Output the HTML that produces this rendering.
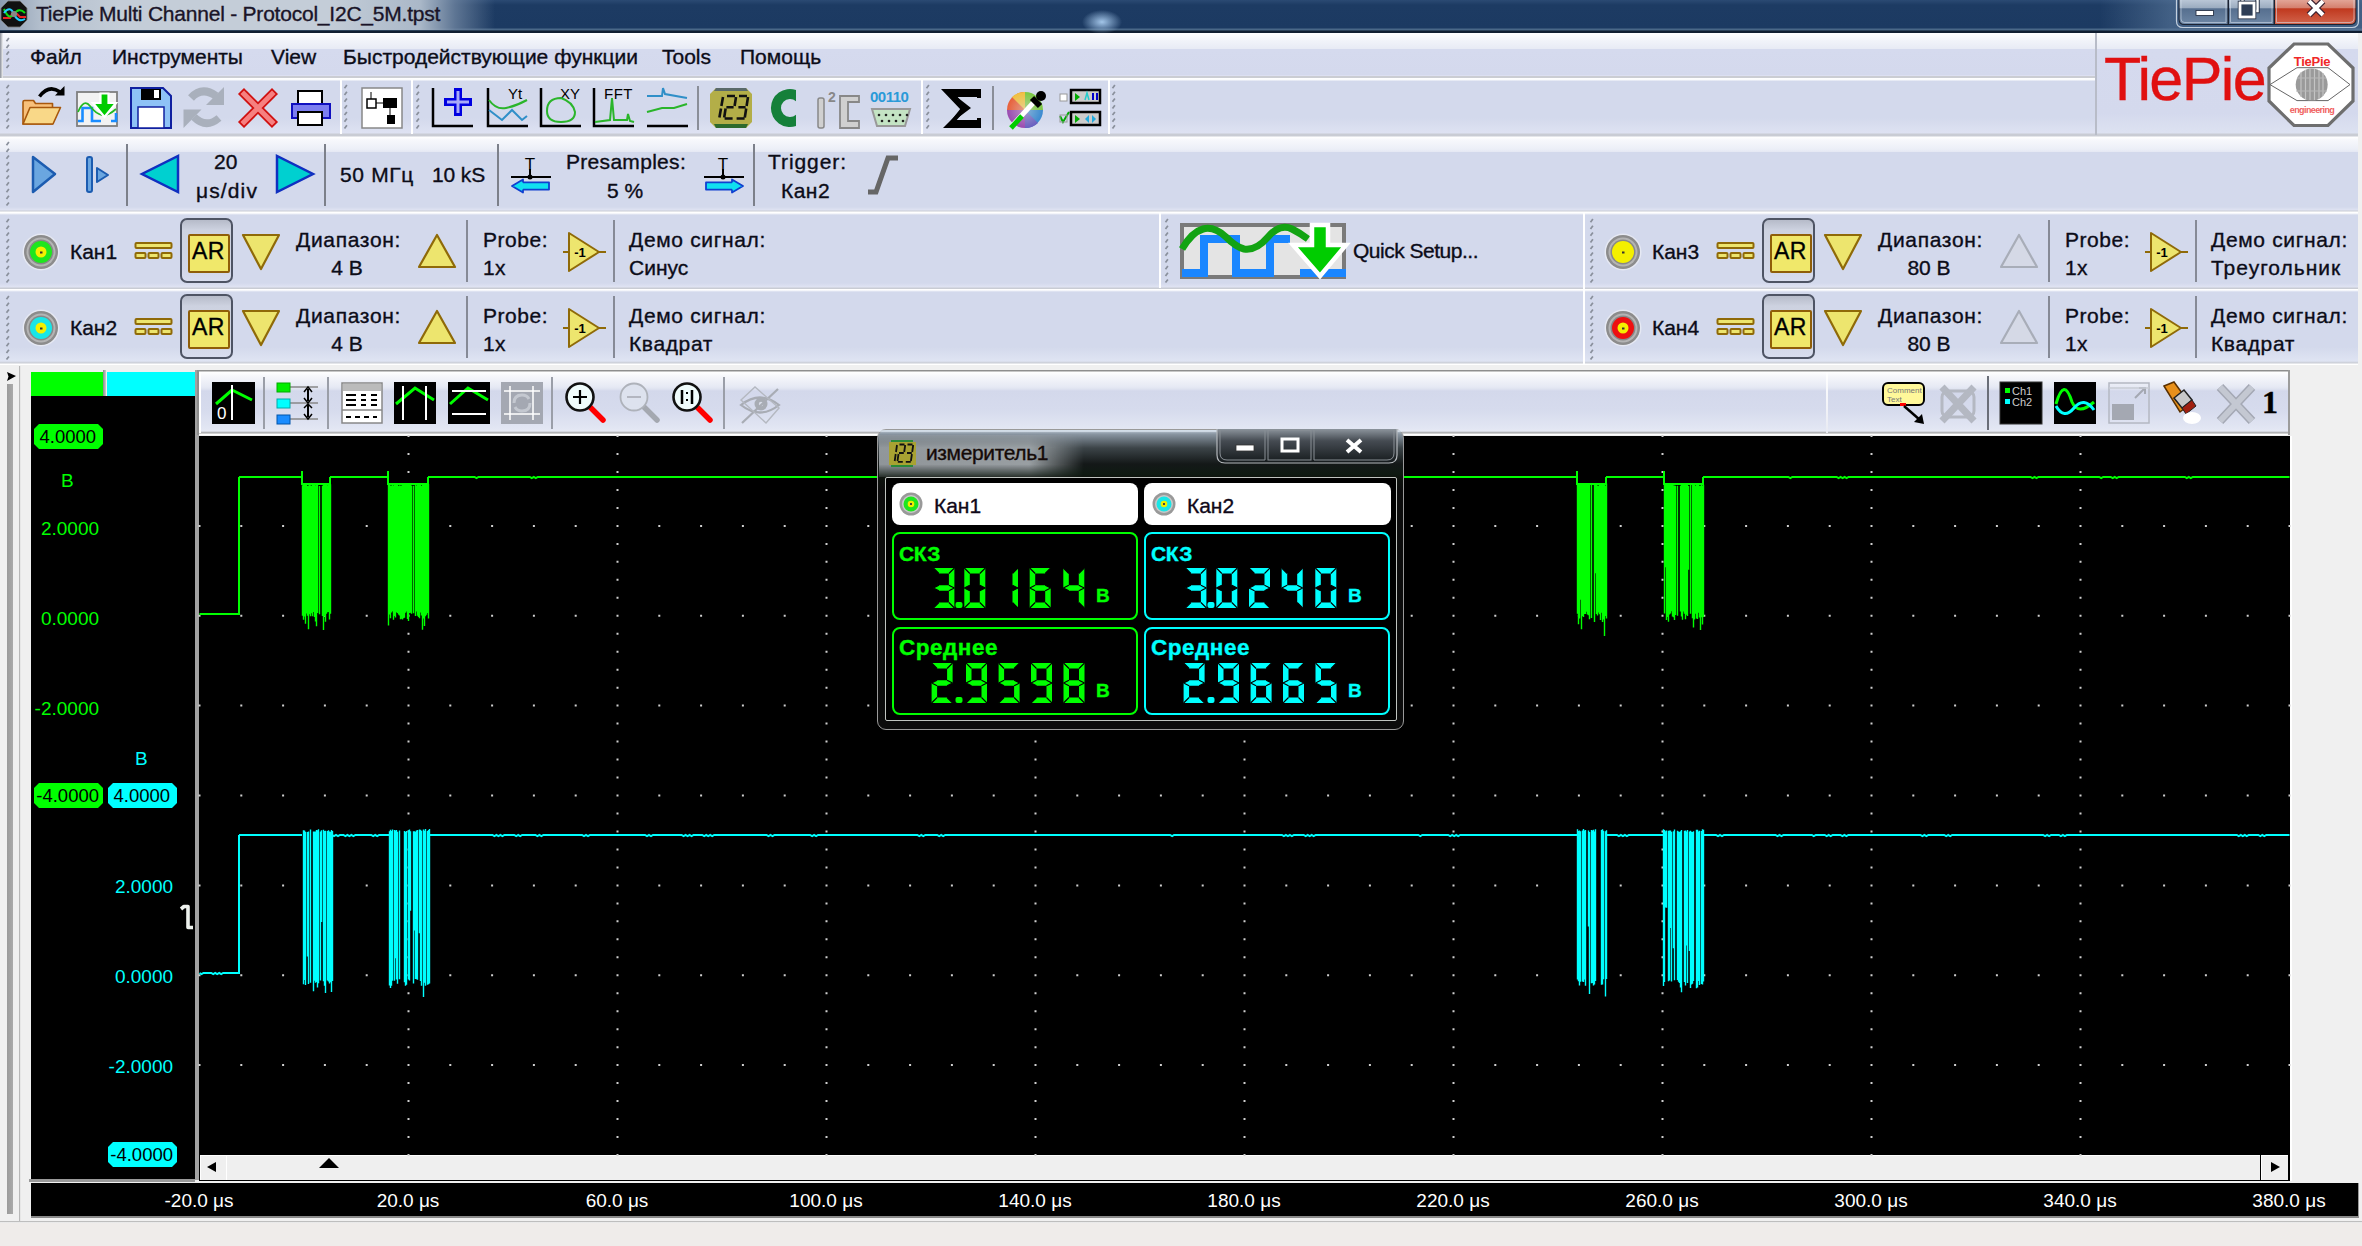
<!DOCTYPE html>
<html><head><meta charset="utf-8"><style>
html,body{margin:0;padding:0;width:2362px;height:1246px;overflow:hidden;background:#f0f0f0;position:relative}
.t{position:absolute;font-family:"Liberation Sans", sans-serif;white-space:nowrap;line-height:1;-webkit-text-stroke:0.35px currentColor}
svg{overflow:visible}
</style></head><body>
<div style="position:absolute;left:0px;top:0px;width:2362px;height:33px;background:linear-gradient(#2b4a73 0px,#1d3b63 5px,#1c3a62 27.5px,#4a6888 29.5px,#2a4058 30.5px,#0f1d30 31px,#0f1d30 33px)"></div>
<div style="position:absolute;left:0px;top:0px;width:500px;height:30px;background:linear-gradient(90deg,rgba(140,156,178,1) 0px,rgba(178,190,204,1) 40px,rgba(196,205,216,1) 120px,rgba(196,205,216,1) 330px,rgba(170,184,200,1) 420px,rgba(110,132,160,0.8) 455px,rgba(28,58,98,0) 495px)"></div>
<div style="position:absolute;left:1080px;top:8px;width:44px;height:26px;background:radial-gradient(ellipse 20px 12px at 22px 14px,rgba(170,205,240,0.95),rgba(170,205,240,0))"></div>
<div style="position:absolute;left:2100px;top:0px;width:262px;height:31px;background:linear-gradient(90deg,rgba(60,90,130,0),rgba(90,120,155,0.6) 70px,rgba(90,120,155,0.6))"></div>
<svg style="position:absolute;left:1px;top:1px;" width="26" height="26" viewBox="0 0 26 26"><polygon points="7,0 19,0 26,7 26,19 19,26 7,26 0,19 0,7" fill="#111" stroke="#777" stroke-width="0.8"/><path d="M2,17 L9,17 L11,13 L16,13 L19,16 L25,16" stroke="#e22" stroke-width="2" fill="none"/><path d="M3,8 Q8,20 13,13 T24,12" stroke="#1d1" stroke-width="2" fill="none"/><path d="M3,12 Q9,4 13,13 T24,18" stroke="#2cf" stroke-width="2" fill="none"/><circle cx="13" cy="13" r="3" fill="#888"/></svg>
<div class="t" style="left:36px;top:3.02px;font-size:21px;color:#1a1428;letter-spacing:-0.22px;">TiePie Multi Channel - Protocol_I2C_5M.tpst</div>
<svg style="position:absolute;left:2174px;top:0px;" width="188" height="30" viewBox="0 0 188 30"><defs><linearGradient id="gb" x1="0" y1="0" x2="0" y2="1"><stop offset="0" stop-color="#b9c6d6"/><stop offset="0.34" stop-color="#9aabbf"/><stop offset="0.36" stop-color="#566f8f"/><stop offset="1" stop-color="#6d86a4"/></linearGradient><linearGradient id="gr" x1="0" y1="0" x2="0" y2="1"><stop offset="0" stop-color="#e2a496"/><stop offset="0.34" stop-color="#d47e6c"/><stop offset="0.36" stop-color="#c0381e"/><stop offset="1" stop-color="#d2644c"/></linearGradient></defs><path d="M2.5,0 L2.5,21 Q2.5,27.5 9,27.5 L178,27.5 Q184.5,27.5 184.5,21 L184.5,0" fill="none" stroke="#c4d0de" stroke-width="1.2"/><path d="M4.5,0 L4.5,19 Q4.5,25 10.5,25 L176,25 Q182.5,25 182.5,19 L182.5,0 Z" fill="#1a2232"/><path d="M5.5,0 L5.5,19 Q5.5,24 10.5,24 L53.5,24 L53.5,0 Z" fill="url(#gb)"/><rect x="55" y="0" width="44.5" height="24" fill="url(#gb)"/><path d="M101,0 L101,24 L176,24 Q181.5,24 181.5,19 L181.5,0 Z" fill="url(#gr)"/><path d="M7,0 L7,19 Q7,22.5 10.5,22.5 L52,22.5 L52,0 M56.5,0 L56.5,22.5 L98,22.5 L98,0 M102.5,0 L102.5,22.5 L176,22.5 Q180,22.5 180,19 L180,0" fill="none" stroke="#d8e2ee" stroke-width="0.8" opacity="0.7"/><rect x="22" y="10.5" width="17.5" height="5" fill="#fff" stroke="#2a3448" stroke-width="0.9"/><rect x="68.5" y="-3" width="15" height="14" fill="none" stroke="#2a3448" stroke-width="4.5"/><rect x="68.5" y="-3" width="15" height="14" fill="none" stroke="#fff" stroke-width="2.5"/><rect x="66" y="3" width="14" height="14" fill="#2e3e56" stroke="#2a3448" stroke-width="4.5"/><rect x="66" y="3" width="14" height="14" fill="#2e3e56" stroke="#fff" stroke-width="2.8"/><path d="M135,1 L149,15 M149,1 L135,15" stroke="#3a2030" stroke-width="6.5"/><path d="M135,1 L149,15 M149,1 L135,15" stroke="#fff" stroke-width="4"/></svg>
<div style="position:absolute;left:0px;top:33px;width:2362px;height:45px;background:linear-gradient(#fdfdfe 0px,#f3f5fa 6px,#e8ebf5 15.5px,#d5daee 16.5px,#d4d9ed 41.5px,#dcdff1 42.5px,#cbcdd3 43.5px,#cbcdd3 45px)"></div>
<div style="position:absolute;left:0px;top:33px;width:3px;height:1213px;background:linear-gradient(90deg,#8a8f98,#f3f4f6)"></div>
<div class="t" style="left:30px;top:46.02px;font-size:21px;color:#0c0c18;">Файл</div>
<div class="t" style="left:112px;top:46.02px;font-size:21px;color:#0c0c18;">Инструменты</div>
<div class="t" style="left:271px;top:46.02px;font-size:21px;color:#0c0c18;">View</div>
<div class="t" style="left:343px;top:46.02px;font-size:21px;color:#0c0c18;">Быстродействующие функции</div>
<div class="t" style="left:662px;top:46.02px;font-size:21px;color:#0c0c18;">Tools</div>
<div class="t" style="left:740px;top:46.02px;font-size:21px;color:#0c0c18;">Помощь</div>
<div style="position:absolute;left:0px;top:78px;width:2095px;height:57px;background:linear-gradient(#ffffff 0px,#fafbfd 2px,#d3d9ec 3px,#d3d9ec 40px,#dee2f2 55px,#c9ccd4 56px,#c9ccd4 57px)"></div>
<div style="position:absolute;left:0px;top:135px;width:2358px;height:77px;background:linear-gradient(#c9ccd4 0px,#c9ccd4 1px,#ffffff 2px,#f7f8fc 5px,#eceff7 14px,#e6e9f4 16.5px,#d3d9ec 17.5px,#d3d9ec 72px,#dfe3f2 75px,#c9ccd4 76px)"></div>
<div style="position:absolute;left:2095px;top:33px;width:263px;height:102px;background:linear-gradient(#fdfdfe 0px,#f3f5fa 6px,#e8ebf5 15.5px,#d5daee 16.5px,#d4d9ed 80px,#dde2f1 100px,#c9ccd4 101px);border-left:2px solid #b8bcc8"></div>
<div style="position:absolute;left:2358px;top:33px;width:4px;height:1213px;background:#f0f0f0"></div>
<svg style="position:absolute;left:5px;top:37px;" width="6" height="32" viewBox="0 0 6 32"><path d="M0.8,3.8 L3.2,0.6 L4.6,1.6 L2.2,4.8 ZM0.8,10.5 L3.2,7.3 L4.6,8.3 L2.2,11.5 ZM0.8,17.2 L3.2,14.0 L4.6,15.0 L2.2,18.2 ZM0.8,23.9 L3.2,20.7 L4.6,21.7 L2.2,24.9 ZM0.8,30.6 L3.2,27.4 L4.6,28.4 L2.2,31.6 Z" fill="#8a909c"/></svg>
<svg style="position:absolute;left:5px;top:84px;" width="6" height="44" viewBox="0 0 6 44"><path d="M0.8,3.8 L3.2,0.6 L4.6,1.6 L2.2,4.8 ZM0.8,10.5 L3.2,7.3 L4.6,8.3 L2.2,11.5 ZM0.8,17.2 L3.2,14.0 L4.6,15.0 L2.2,18.2 ZM0.8,23.9 L3.2,20.7 L4.6,21.7 L2.2,24.9 ZM0.8,30.6 L3.2,27.4 L4.6,28.4 L2.2,31.6 ZM0.8,37.3 L3.2,34.1 L4.6,35.1 L2.2,38.3 ZM0.8,44.0 L3.2,40.8 L4.6,41.8 L2.2,45.0 Z" fill="#8a909c"/></svg>
<svg style="position:absolute;left:343px;top:84px;" width="6" height="44" viewBox="0 0 6 44"><path d="M0.8,3.8 L3.2,0.6 L4.6,1.6 L2.2,4.8 ZM0.8,10.5 L3.2,7.3 L4.6,8.3 L2.2,11.5 ZM0.8,17.2 L3.2,14.0 L4.6,15.0 L2.2,18.2 ZM0.8,23.9 L3.2,20.7 L4.6,21.7 L2.2,24.9 ZM0.8,30.6 L3.2,27.4 L4.6,28.4 L2.2,31.6 ZM0.8,37.3 L3.2,34.1 L4.6,35.1 L2.2,38.3 ZM0.8,44.0 L3.2,40.8 L4.6,41.8 L2.2,45.0 Z" fill="#8a909c"/></svg>
<svg style="position:absolute;left:415px;top:84px;" width="6" height="44" viewBox="0 0 6 44"><path d="M0.8,3.8 L3.2,0.6 L4.6,1.6 L2.2,4.8 ZM0.8,10.5 L3.2,7.3 L4.6,8.3 L2.2,11.5 ZM0.8,17.2 L3.2,14.0 L4.6,15.0 L2.2,18.2 ZM0.8,23.9 L3.2,20.7 L4.6,21.7 L2.2,24.9 ZM0.8,30.6 L3.2,27.4 L4.6,28.4 L2.2,31.6 ZM0.8,37.3 L3.2,34.1 L4.6,35.1 L2.2,38.3 ZM0.8,44.0 L3.2,40.8 L4.6,41.8 L2.2,45.0 Z" fill="#8a909c"/></svg>
<svg style="position:absolute;left:925px;top:84px;" width="6" height="44" viewBox="0 0 6 44"><path d="M0.8,3.8 L3.2,0.6 L4.6,1.6 L2.2,4.8 ZM0.8,10.5 L3.2,7.3 L4.6,8.3 L2.2,11.5 ZM0.8,17.2 L3.2,14.0 L4.6,15.0 L2.2,18.2 ZM0.8,23.9 L3.2,20.7 L4.6,21.7 L2.2,24.9 ZM0.8,30.6 L3.2,27.4 L4.6,28.4 L2.2,31.6 ZM0.8,37.3 L3.2,34.1 L4.6,35.1 L2.2,38.3 ZM0.8,44.0 L3.2,40.8 L4.6,41.8 L2.2,45.0 Z" fill="#8a909c"/></svg>
<svg style="position:absolute;left:1111px;top:84px;" width="6" height="44" viewBox="0 0 6 44"><path d="M0.8,3.8 L3.2,0.6 L4.6,1.6 L2.2,4.8 ZM0.8,10.5 L3.2,7.3 L4.6,8.3 L2.2,11.5 ZM0.8,17.2 L3.2,14.0 L4.6,15.0 L2.2,18.2 ZM0.8,23.9 L3.2,20.7 L4.6,21.7 L2.2,24.9 ZM0.8,30.6 L3.2,27.4 L4.6,28.4 L2.2,31.6 ZM0.8,37.3 L3.2,34.1 L4.6,35.1 L2.2,38.3 ZM0.8,44.0 L3.2,40.8 L4.6,41.8 L2.2,45.0 Z" fill="#8a909c"/></svg>
<svg style="position:absolute;left:5px;top:141px;" width="6" height="66" viewBox="0 0 6 66"><path d="M0.8,3.8 L3.2,0.6 L4.6,1.6 L2.2,4.8 ZM0.8,10.5 L3.2,7.3 L4.6,8.3 L2.2,11.5 ZM0.8,17.2 L3.2,14.0 L4.6,15.0 L2.2,18.2 ZM0.8,23.9 L3.2,20.7 L4.6,21.7 L2.2,24.9 ZM0.8,30.6 L3.2,27.4 L4.6,28.4 L2.2,31.6 ZM0.8,37.3 L3.2,34.1 L4.6,35.1 L2.2,38.3 ZM0.8,44.0 L3.2,40.8 L4.6,41.8 L2.2,45.0 ZM0.8,50.7 L3.2,47.5 L4.6,48.5 L2.2,51.7 ZM0.8,57.4 L3.2,54.2 L4.6,55.2 L2.2,58.4 ZM0.8,64.1 L3.2,60.9 L4.6,61.9 L2.2,65.1 Z" fill="#8a909c"/></svg>
<div style="position:absolute;left:340px;top:80px;width:2px;height:54px;background:#fff"></div>
<div style="position:absolute;left:411px;top:80px;width:2px;height:54px;background:#fff"></div>
<div style="position:absolute;left:921px;top:80px;width:2px;height:54px;background:#fff"></div>
<div style="position:absolute;left:1108px;top:80px;width:2px;height:54px;background:#fff"></div>
<div style="position:absolute;left:697px;top:86px;width:2px;height:44px;background:#8a8e98"></div>
<div style="position:absolute;left:992px;top:86px;width:2px;height:44px;background:#8a8e98"></div>
<div style="position:absolute;left:126px;top:144px;width:2px;height:62px;background:#7c808a"></div>
<div style="position:absolute;left:324px;top:144px;width:2px;height:62px;background:#7c808a"></div>
<div style="position:absolute;left:497px;top:144px;width:2px;height:62px;background:#7c808a"></div>
<div style="position:absolute;left:753px;top:144px;width:2px;height:62px;background:#7c808a"></div>
<svg style="position:absolute;left:20px;top:85px;" width="46" height="44" viewBox="0 0 46 44"><path d="M19.5,11.5 Q29,-1 40,7" stroke="#000" stroke-width="3.6" fill="none"/><polygon points="44.5,1 44.5,10.5 35,10.5" fill="#000"/><path d="M3,39 L3,17 Q3,15.5 4.5,15.5 L13.5,15.5 L15.5,18.5 L32.5,18.5 L32.5,39 Z" fill="#f8c07a" stroke="#a8580c" stroke-width="1.6" stroke-linejoin="round"/><path d="M3,39 L33,39 L40.5,22.5 L10,22.5 Z" fill="#f9d888" stroke="#a8580c" stroke-width="1.6" stroke-linejoin="round"/></svg>
<svg style="position:absolute;left:76px;top:91px;" width="42" height="36" viewBox="0 0 42 36"><rect x="1" y="1" width="40" height="34" fill="#f2f2f2" stroke="#7e7e7e" stroke-width="1.8"/><path d="M2,30 L6.5,30 L6.5,17 L16,17 L16,30 L25,30" stroke="#1a8cff" stroke-width="2.6" fill="none"/><path d="M35,30 L40,30 L40,22" stroke="#1a8cff" stroke-width="2.6" fill="none"/><path d="M2,21 Q8,7 14,15 T26,24 T40,18" stroke="#22bb22" stroke-width="1.8" fill="none"/><polygon points="24.5,2.5 32.5,2.5 32.5,12 40,12 28.5,26 17,12 24.5,12" fill="#00cc00" stroke="#fff" stroke-width="2.2"/></svg>
<svg style="position:absolute;left:130px;top:87px;" width="42" height="42" viewBox="0 0 42 42"><path d="M1,1 L33,1 L41,9 L41,41 L1,41 Z" fill="#8ec2f6" stroke="#1020a0" stroke-width="2"/><rect x="11" y="2" width="20" height="11" fill="#000"/><rect x="24" y="3" width="5" height="8" fill="#fff"/><rect x="8" y="20" width="26" height="21" fill="#fff" stroke="#1020a0" stroke-width="1.5"/></svg>
<svg style="position:absolute;left:183px;top:87px;" width="44" height="42" viewBox="0 0 44 42"><path d="M8,11 Q19,-1 33,9" stroke="#a9b0bc" stroke-width="8" fill="none"/><polygon points="41,0 41,18 23,18" fill="#a9b0bc"/><path d="M11,30 Q23,42 36,31" stroke="#a9b0bc" stroke-width="7.5" fill="none"/><polygon points="0.5,22.5 0.5,41 18.5,22.5" fill="#a9b0bc"/></svg>
<svg style="position:absolute;left:238px;top:88px;" width="40" height="40" viewBox="0 0 40 40"><path d="M6,6 L34,34 M34,6 L6,34" stroke="#d01010" stroke-width="8.5" stroke-linecap="square"/><path d="M6,6 L34,34 M34,6 L6,34" stroke="#f68080" stroke-width="5" stroke-linecap="square"/></svg>
<svg style="position:absolute;left:291px;top:90px;" width="40" height="36" viewBox="0 0 40 36"><rect x="7" y="1" width="24" height="16" fill="#fff" stroke="#000" stroke-width="2"/><rect x="1" y="14" width="38" height="14" fill="#7c7ef0" stroke="#1010c0" stroke-width="2"/><rect x="7" y="22" width="24" height="13" fill="#fff" stroke="#000" stroke-width="2"/></svg>
<svg style="position:absolute;left:361px;top:87px;" width="42" height="42" viewBox="0 0 42 42"><rect x="1" y="1" width="40" height="40" fill="#fff" stroke="#888" stroke-width="1.5"/><rect x="6" y="12" width="9" height="9" fill="#fff" stroke="#000" stroke-width="1.5"/><line x1="10" y1="5" x2="10" y2="12" stroke="#000"/><line x1="15" y1="16" x2="22" y2="16" stroke="#000"/><rect x="22" y="11" width="14" height="10" fill="#000"/><line x1="29" y1="21" x2="29" y2="30" stroke="#000"/><rect x="26" y="28" width="8" height="9" fill="#000"/></svg>
<svg style="position:absolute;left:431px;top:86px;" width="44" height="44" viewBox="0 0 44 44"><path d="M2,2 L2,40 L42,40" stroke="#000" stroke-width="2.5" fill="none"/><path d="M27,2 L27,30 M13,16 L41,16" stroke="#0000e0" stroke-width="8"/><path d="M27,5 L27,27 M16,16 L38,16" stroke="#a8aaf8" stroke-width="3"/></svg>
<svg style="position:absolute;left:486px;top:86px;" width="44" height="44" viewBox="0 0 44 44"><path d="M2,2 L2,40 L42,40" stroke="#000" stroke-width="2.5" fill="none"/><text x="22" y="13" font-family="Liberation Sans" font-size="15">Yt</text><path d="M3,14 Q10,24 20,22 T41,14" stroke="#2ab52a" stroke-width="2" fill="none"/><path d="M3,24 L16,34 L26,24 L36,34 L41,30" stroke="#2f8fc8" stroke-width="2" fill="none"/></svg>
<svg style="position:absolute;left:539px;top:86px;" width="44" height="44" viewBox="0 0 44 44"><path d="M2,2 L2,40 L42,40" stroke="#000" stroke-width="2.5" fill="none"/><text x="21" y="13" font-family="Liberation Sans" font-size="15">XY</text><path d="M22,12 Q8,12 8,25 Q8,36 22,36 Q36,36 36,26 Q34,16 22,12 Z" stroke="#2ab52a" stroke-width="2" fill="none"/></svg>
<svg style="position:absolute;left:592px;top:86px;" width="44" height="44" viewBox="0 0 44 44"><path d="M2,2 L2,40 L42,40" stroke="#000" stroke-width="2.5" fill="none"/><text x="12" y="13" font-family="Liberation Sans" font-size="15" letter-spacing="0.5">FFT</text><path d="M3,36 L18,34 L20,12 L22,34 L35,34 L36,28 L38,35 L42,36" stroke="#2ab52a" stroke-width="2" fill="none"/></svg>
<svg style="position:absolute;left:646px;top:86px;" width="44" height="44" viewBox="0 0 44 44"><path d="M1,40 L42,40" stroke="#000" stroke-width="2.5"/><path d="M1,10 L16,10 L17,2 L19,8 L41,12" stroke="#2f8fc8" stroke-width="2" fill="none"/><path d="M1,26 L16,22 L28,22 L41,18" stroke="#2ab52a" stroke-width="2" fill="none"/></svg>
<svg style="position:absolute;left:709px;top:87px;" width="44" height="42" viewBox="0 0 44 42"><path d="M7,1 L37,1 L43,7 L43,35 L37,41 L7,41 L1,35 L1,7 Z" fill="#b3ae48"/><path d="M7,1 L37,1 L39,4 L5,4 Z" fill="#5a6a6a"/><path d="M5,37 L39,37 L37,41 L7,41 Z" fill="#2d6a2d"/><path d="M14,10 L12.4,19 M12,21.5 L10.4,30.5 M18,9 L26,9 M27,10 L25.6,19 M17.4,20.3 L24.6,20.3 M16.6,21.5 L15.2,30.5 M15.6,31.5 L23.6,31.5 M30,9 L38,9 M39,10 L37.6,19 M29.4,20.3 L36.6,20.3 M37.2,21.5 L35.8,30.5 M27.6,31.5 L35.6,31.5" stroke="#111" stroke-width="2.6"/></svg>
<svg style="position:absolute;left:770px;top:88px;" width="28" height="40" viewBox="0 0 28 40"><path d="M26,2 A19,19 0 1 0 26,38 L26,26.7 A9,9 0 1 1 26,13.3 Z" fill="#15803a"/></svg>
<svg style="position:absolute;left:816px;top:88px;" width="46" height="40" viewBox="0 0 46 40"><rect x="2" y="10" width="6" height="30" rx="2" fill="#d0d0d0" stroke="#888" stroke-width="1.5"/><text x="12" y="14" font-family="Liberation Sans" font-size="14" font-weight="bold" fill="#888">2</text><path d="M43,14 L43,8 L24,8 L24,40 L43,40 L43,33 L32,33 L32,14 Z" fill="#d0d0d0" stroke="#888" stroke-width="1.8"/></svg>
<svg style="position:absolute;left:870px;top:88px;" width="42" height="40" viewBox="0 0 42 40"><text x="0" y="14" font-family="Liberation Sans" font-size="15" font-weight="bold" fill="#2a9ad8" letter-spacing="-0.5">00110</text><path d="M2,21 L40,21 L35,38 L7,38 Z" fill="#c4e4c4" stroke="#999" stroke-width="2"/><g fill="#222"><circle cx="9" cy="27" r="1.3"/><circle cx="16" cy="27" r="1.3"/><circle cx="23" cy="27" r="1.3"/><circle cx="30" cy="27" r="1.3"/><circle cx="37" cy="27" r="1.3"/><circle cx="12" cy="33" r="1.3"/><circle cx="19" cy="33" r="1.3"/><circle cx="26" cy="33" r="1.3"/><circle cx="33" cy="33" r="1.3"/></g></svg>
<svg style="position:absolute;left:941px;top:88px;" width="42" height="40" viewBox="0 0 42 40"><path d="M2,1 L40,1 L40,10 L36,10 L36,6 L14,6 L26,20 L14,34 L36,34 L36,30 L40,30 L40,40 L4,40 L20,20 Z" fill="#000"/><path d="M0,1 L40,1 L40,9 L16,9 L30,20 L14,32 L40,32 L40,40 L2,40 L20,22 Z" fill="#000"/></svg>
<svg style="position:absolute;left:1006px;top:88px;" width="42" height="42" viewBox="0 0 42 42"><defs><radialGradient id="cw" cx="0.5" cy="0.5" r="0.5"><stop offset="0" stop-color="#ddd"/><stop offset="1" stop-color="#ddd" stop-opacity="0"/></radialGradient></defs><circle cx="19" cy="22" r="18" fill="url(#cwc)"/><path d="M19,22 L19,4 A18,18 0 0 1 37,22 Z" fill="#7bc843"/><path d="M19,22 L37,22 A18,18 0 0 1 19,40 Z" fill="#3a8ad0"/><path d="M19,22 L19,40 A18,18 0 0 1 1,22 Z" fill="#9a4ab0"/><path d="M19,22 L1,22 A18,18 0 0 1 19,4 Z" fill="#e8603a"/><path d="M19,22 L6,9 A18,18 0 0 1 19,4 Z" fill="#f0c040"/><path d="M19,22 L32,35 A18,18 0 0 1 19,40 Z" fill="#6a60c0"/><circle cx="19" cy="22" r="18" fill="url(#cw)" opacity="0.5"/><path d="M6,38 L28,14" stroke="#fff" stroke-width="5"/><path d="M5,40 L16,28" stroke="#0c0" stroke-width="5"/><path d="M26,10 L34,18" stroke="#000" stroke-width="6"/><circle cx="35" cy="8" r="5" fill="#000"/></svg>
<svg style="position:absolute;left:1059px;top:88px;" width="44" height="40" viewBox="0 0 44 40"><rect x="1" y="6" width="7" height="7" fill="#fff" stroke="#999"/><rect x="12" y="2" width="29" height="13" fill="#ccc" stroke="#000" stroke-width="2.5"/><polygon points="16,5 21,9 16,13" fill="#0a0"/><path d="M26,12 L28,5 L30,12" stroke="#2cc" stroke-width="1.5" fill="none"/><rect x="33" y="5" width="2" height="7" fill="#00c"/><rect x="37" y="5" width="2" height="7" fill="#00c"/><path d="M1,28 L4,34 L10,24" stroke="#0a0" stroke-width="2" fill="none"/><rect x="1" y="27" width="7" height="7" fill="none" stroke="#999"/><rect x="12" y="24" width="29" height="13" fill="#ccc" stroke="#000" stroke-width="2.5"/><polygon points="16,27 21,31 16,35" fill="#0a0"/><polygon points="30,27 26,31 30,35" fill="#2ad"/><polygon points="33,27 37,31 33,35" fill="#2ad"/></svg>
<div class="t" style="left:2104px;top:49.36px;font-size:61px;color:#e01010;letter-spacing:-1.60px;">TiePie</div>
<svg style="position:absolute;left:2266px;top:42px;" width="90" height="86" viewBox="0 0 90 86"><polygon points="28,2 62,2 87,26 87,59 62,83.5 28,83.5 3,59 3,26" fill="#fff" stroke="#6e6e6e" stroke-width="3.2"/><text x="46" y="23.5" text-anchor="middle" font-family="Liberation Sans" font-size="13" font-weight="bold" fill="#f02828" letter-spacing="-0.3">TiePie</text><path d="M4,42.6 L31,25.7 L62,25.7 L84,42.6 L62,58.6 L31,58.6 Z" fill="none" stroke="#666" stroke-width="1"/><circle cx="45.7" cy="42.6" r="16" fill="#9a9a9a"/><path d="M35,30 L35,55 M39.5,28 L39.5,57 M44,27 L44,58 M48.5,27 L48.5,58 M53,28 L53,57 M57,31 L57,54" stroke="#c4c4c4" stroke-width="1.2"/><path d="M31,36 L60,36 M30,49 L61,49" stroke="#b8b8b8" stroke-width="1"/><text x="46" y="71" text-anchor="middle" font-family="Liberation Sans" font-size="9" font-weight="bold" fill="#f06060" letter-spacing="-0.6">engineering</text></svg>
<svg style="position:absolute;left:31px;top:155px;" width="26" height="40" viewBox="0 0 26 40"><polygon points="2,2 24,19 2,37" fill="#6aa6e0" stroke="#1c5cb0" stroke-width="2.5" stroke-linejoin="round"/></svg>
<svg style="position:absolute;left:85px;top:155px;" width="26" height="40" viewBox="0 0 26 40"><rect x="2" y="2" width="5" height="35" rx="2" fill="#6aa6e0" stroke="#1c5cb0" stroke-width="2"/><polygon points="12,13 23,20 12,27" fill="#6aa6e0" stroke="#1c5cb0" stroke-width="2" stroke-linejoin="round"/></svg>
<svg style="position:absolute;left:140px;top:154px;" width="40" height="41" viewBox="0 0 40 41"><polygon points="38,2 38,38 2,20" fill="#00d0d0" stroke="#1030c0" stroke-width="2.5"/></svg>
<div class="t" style="left:214px;top:151.22px;font-size:21px;color:#0c0c18;">20</div>
<div class="t" style="left:196px;top:179.52px;font-size:21px;color:#0c0c18;letter-spacing:1.12px;">μs/div</div>
<svg style="position:absolute;left:275px;top:154px;" width="40" height="41" viewBox="0 0 40 41"><polygon points="2,2 2,38 38,20" fill="#00d0d0" stroke="#1030c0" stroke-width="2.5"/></svg>
<div class="t" style="left:340px;top:163.92px;font-size:21px;color:#0c0c18;letter-spacing:0.65px;">50 МГц</div>
<div class="t" style="left:432px;top:163.92px;font-size:21px;color:#0c0c18;letter-spacing:-0.13px;">10 kS</div>
<svg style="position:absolute;left:509px;top:154px;" width="44" height="42" viewBox="0 0 44 42"><text x="21" y="16" text-anchor="middle" font-family="Liberation Sans" font-size="17">T</text><path d="M21,15 L21,23 M2,23 L42,23" stroke="#000" stroke-width="2"/><circle cx="21" cy="23" r="2.5" fill="#000"/><path d="M14,28.5 L40,28.5 L40,35.5 L14,35.5 M14,28.5 L14,25.5 L3,32 L14,38.5 L14,35.5" fill="#10e0f0" stroke="#1040d0" stroke-width="1.8" stroke-linejoin="round"/><rect x="14" y="29.5" width="25" height="5" fill="#10e0f0"/></svg>
<div class="t" style="left:566px;top:151.22px;font-size:21px;color:#0c0c18;letter-spacing:0.30px;">Presamples:</div>
<div class="t" style="left:607px;top:180.22px;font-size:21px;color:#0c0c18;letter-spacing:-0.06px;">5 %</div>
<svg style="position:absolute;left:702px;top:154px;" width="44" height="42" viewBox="0 0 44 42"><text x="21" y="16" text-anchor="middle" font-family="Liberation Sans" font-size="17">T</text><path d="M21,15 L21,23 M2,23 L42,23" stroke="#000" stroke-width="2"/><circle cx="21" cy="23" r="2.5" fill="#000"/><path d="M30,28.5 L4,28.5 L4,35.5 L30,35.5 M30,28.5 L30,25.5 L41,32 L30,38.5 L30,35.5" fill="#10e0f0" stroke="#1040d0" stroke-width="1.8" stroke-linejoin="round"/><rect x="5" y="29.5" width="25" height="5" fill="#10e0f0"/></svg>
<div class="t" style="left:768px;top:151.22px;font-size:21px;color:#0c0c18;letter-spacing:0.93px;">Trigger:</div>
<div class="t" style="left:781px;top:179.52px;font-size:21px;color:#0c0c18;letter-spacing:0.46px;">Кан2</div>
<svg style="position:absolute;left:864px;top:154px;" width="40" height="42" viewBox="0 0 40 42"><path d="M4,38 L12,38 L24,4 L34,4" stroke="#666" stroke-width="5" fill="none"/></svg>
<div style="position:absolute;left:0px;top:211px;width:2358px;height:78px;background:linear-gradient(#c9ccd4 0px,#ffffff 1px,#ffffff 2px,#d3d9ec 4px,#d3d9ec 72px,#dfe3f2 76px,#c9ccd4 77px)"></div>
<div style="position:absolute;left:0px;top:289px;width:2358px;height:76px;background:linear-gradient(#ffffff 0px,#ffffff 1px,#d3d9ec 3px,#d3d9ec 58px,#dfe4f3 72px,#c9ccd4 74px,#ffffff 75px)"></div>
<svg style="position:absolute;left:5px;top:218px;" width="6" height="64" viewBox="0 0 6 64"><path d="M0.8,3.8 L3.2,0.6 L4.6,1.6 L2.2,4.8 ZM0.8,10.5 L3.2,7.3 L4.6,8.3 L2.2,11.5 ZM0.8,17.2 L3.2,14.0 L4.6,15.0 L2.2,18.2 ZM0.8,23.9 L3.2,20.7 L4.6,21.7 L2.2,24.9 ZM0.8,30.6 L3.2,27.4 L4.6,28.4 L2.2,31.6 ZM0.8,37.3 L3.2,34.1 L4.6,35.1 L2.2,38.3 ZM0.8,44.0 L3.2,40.8 L4.6,41.8 L2.2,45.0 ZM0.8,50.7 L3.2,47.5 L4.6,48.5 L2.2,51.7 ZM0.8,57.4 L3.2,54.2 L4.6,55.2 L2.2,58.4 ZM0.8,64.1 L3.2,60.9 L4.6,61.9 L2.2,65.1 Z" fill="#8a909c"/></svg>
<svg style="position:absolute;left:5px;top:295px;" width="6" height="64" viewBox="0 0 6 64"><path d="M0.8,3.8 L3.2,0.6 L4.6,1.6 L2.2,4.8 ZM0.8,10.5 L3.2,7.3 L4.6,8.3 L2.2,11.5 ZM0.8,17.2 L3.2,14.0 L4.6,15.0 L2.2,18.2 ZM0.8,23.9 L3.2,20.7 L4.6,21.7 L2.2,24.9 ZM0.8,30.6 L3.2,27.4 L4.6,28.4 L2.2,31.6 ZM0.8,37.3 L3.2,34.1 L4.6,35.1 L2.2,38.3 ZM0.8,44.0 L3.2,40.8 L4.6,41.8 L2.2,45.0 ZM0.8,50.7 L3.2,47.5 L4.6,48.5 L2.2,51.7 ZM0.8,57.4 L3.2,54.2 L4.6,55.2 L2.2,58.4 ZM0.8,64.1 L3.2,60.9 L4.6,61.9 L2.2,65.1 Z" fill="#8a909c"/></svg>
<svg style="position:absolute;left:1164px;top:218px;" width="6" height="64" viewBox="0 0 6 64"><path d="M0.8,3.8 L3.2,0.6 L4.6,1.6 L2.2,4.8 ZM0.8,10.5 L3.2,7.3 L4.6,8.3 L2.2,11.5 ZM0.8,17.2 L3.2,14.0 L4.6,15.0 L2.2,18.2 ZM0.8,23.9 L3.2,20.7 L4.6,21.7 L2.2,24.9 ZM0.8,30.6 L3.2,27.4 L4.6,28.4 L2.2,31.6 ZM0.8,37.3 L3.2,34.1 L4.6,35.1 L2.2,38.3 ZM0.8,44.0 L3.2,40.8 L4.6,41.8 L2.2,45.0 ZM0.8,50.7 L3.2,47.5 L4.6,48.5 L2.2,51.7 ZM0.8,57.4 L3.2,54.2 L4.6,55.2 L2.2,58.4 ZM0.8,64.1 L3.2,60.9 L4.6,61.9 L2.2,65.1 Z" fill="#8a909c"/></svg>
<svg style="position:absolute;left:1589px;top:218px;" width="6" height="64" viewBox="0 0 6 64"><path d="M0.8,3.8 L3.2,0.6 L4.6,1.6 L2.2,4.8 ZM0.8,10.5 L3.2,7.3 L4.6,8.3 L2.2,11.5 ZM0.8,17.2 L3.2,14.0 L4.6,15.0 L2.2,18.2 ZM0.8,23.9 L3.2,20.7 L4.6,21.7 L2.2,24.9 ZM0.8,30.6 L3.2,27.4 L4.6,28.4 L2.2,31.6 ZM0.8,37.3 L3.2,34.1 L4.6,35.1 L2.2,38.3 ZM0.8,44.0 L3.2,40.8 L4.6,41.8 L2.2,45.0 ZM0.8,50.7 L3.2,47.5 L4.6,48.5 L2.2,51.7 ZM0.8,57.4 L3.2,54.2 L4.6,55.2 L2.2,58.4 ZM0.8,64.1 L3.2,60.9 L4.6,61.9 L2.2,65.1 Z" fill="#8a909c"/></svg>
<svg style="position:absolute;left:1589px;top:295px;" width="6" height="64" viewBox="0 0 6 64"><path d="M0.8,3.8 L3.2,0.6 L4.6,1.6 L2.2,4.8 ZM0.8,10.5 L3.2,7.3 L4.6,8.3 L2.2,11.5 ZM0.8,17.2 L3.2,14.0 L4.6,15.0 L2.2,18.2 ZM0.8,23.9 L3.2,20.7 L4.6,21.7 L2.2,24.9 ZM0.8,30.6 L3.2,27.4 L4.6,28.4 L2.2,31.6 ZM0.8,37.3 L3.2,34.1 L4.6,35.1 L2.2,38.3 ZM0.8,44.0 L3.2,40.8 L4.6,41.8 L2.2,45.0 ZM0.8,50.7 L3.2,47.5 L4.6,48.5 L2.2,51.7 ZM0.8,57.4 L3.2,54.2 L4.6,55.2 L2.2,58.4 ZM0.8,64.1 L3.2,60.9 L4.6,61.9 L2.2,65.1 Z" fill="#8a909c"/></svg>
<div style="position:absolute;left:1159px;top:212px;width:2px;height:76px;background:#fff"></div>
<div style="position:absolute;left:1583px;top:212px;width:2px;height:152px;background:#fff"></div>
<svg style="position:absolute;left:21px;top:232px;" width="40" height="40" viewBox="0 0 40 40"><circle cx="20" cy="20" r="18.5" fill="#eef0f6" opacity="0.7"/><circle cx="20" cy="20" r="17" fill="#8c8c8c"/><circle cx="20" cy="20" r="14.5" fill="#b4b4b4"/><circle cx="20" cy="20" r="12.5" fill="#888"/><circle cx="20" cy="20" r="11" fill="#1ee61e"/><circle cx="20" cy="20" r="5.5" fill="#f4f000"/><rect x="19" y="19.5" width="2.5" height="2" fill="#333"/></svg>
<div class="t" style="left:70px;top:241.22px;font-size:21px;color:#0c0c18;letter-spacing:-0.04px;">Кан1</div>
<svg style="position:absolute;left:134px;top:242px;" width="40" height="18" viewBox="0 0 40 18"><rect x="1.5" y="1" width="36" height="5" rx="1" fill="#ede56e" stroke="#8f6a08" stroke-width="2"/><rect x="1.5" y="11" width="10" height="5" rx="1" fill="#ede56e" stroke="#8f6a08" stroke-width="2"/><rect x="14.5" y="11" width="10" height="5" rx="1" fill="#ede56e" stroke="#8f6a08" stroke-width="2"/><rect x="27.5" y="11" width="10" height="5" rx="1" fill="#ede56e" stroke="#8f6a08" stroke-width="2"/></svg>
<div style="position:absolute;left:180px;top:218px;width:49px;height:61px;border:2px solid #4e5464;border-radius:7px;background:linear-gradient(#b6bbc9 0px,#cdd2e0 10px,#d2d7e8 50px,#d8ddee 61px)"></div>
<div style="position:absolute;left:188px;top:234px;width:38px;height:35px;background:#f0e86a;border:2px solid #8f5e08;border-radius:2px"></div>
<div class="t" style="left:192px;top:239.53px;font-size:23px;color:#000;letter-spacing:0.52px;">AR</div>
<svg style="position:absolute;left:242px;top:233px;" width="38" height="38" viewBox="0 0 38 38"><polygon points="1,2 37,2 19,36" fill="#ede56e" stroke="#8f6a08" stroke-width="2.2" stroke-linejoin="round"/></svg>
<div class="t" style="left:296px;top:229.02px;font-size:21px;color:#0c0c18;letter-spacing:0.68px;">Диапазон:</div>
<div class="t" style="left:331.25px;top:257.22px;font-size:21px;color:#0c0c18;">4 В</div>
<svg style="position:absolute;left:418px;top:233px;" width="38" height="38" viewBox="0 0 38 38"><polygon points="19,2 37,34 1,34" fill="#ede56e" stroke="#8f6a08" stroke-width="2.2" stroke-linejoin="round"/></svg>
<div style="position:absolute;left:466px;top:220px;width:2px;height:62px;background:#868a96"></div>
<div class="t" style="left:483px;top:229.02px;font-size:21px;color:#0c0c18;letter-spacing:0.53px;">Probe:</div>
<div class="t" style="left:483px;top:257.22px;font-size:21px;color:#0c0c18;letter-spacing:0.41px;">1x</div>
<svg style="position:absolute;left:563px;top:232px;" width="44" height="40" viewBox="0 0 44 40"><path d="M0,20 L6,20 M36,20 L43,20" stroke="#8f6a08" stroke-width="2"/><polygon points="6,1 36,20 6,39" fill="#ede56e" stroke="#8f6a08" stroke-width="2" stroke-linejoin="round"/><text x="17" y="25" text-anchor="middle" font-family="Liberation Sans" font-size="13" font-weight="bold" fill="#000">-1</text></svg>
<div style="position:absolute;left:613px;top:220px;width:2px;height:62px;background:#868a96"></div>
<div class="t" style="left:629px;top:229.02px;font-size:21px;color:#0c0c18;letter-spacing:0.66px;">Демо сигнал:</div>
<div class="t" style="left:629px;top:257.22px;font-size:21px;color:#0c0c18;">Синус</div>
<svg style="position:absolute;left:21px;top:308px;" width="40" height="40" viewBox="0 0 40 40"><circle cx="20" cy="20" r="18.5" fill="#eef0f6" opacity="0.7"/><circle cx="20" cy="20" r="17" fill="#8c8c8c"/><circle cx="20" cy="20" r="14.5" fill="#b4b4b4"/><circle cx="20" cy="20" r="12.5" fill="#888"/><circle cx="20" cy="20" r="11" fill="#19e6e6"/><circle cx="20" cy="20" r="5.5" fill="#f4f000"/><rect x="19" y="19.5" width="2.5" height="2" fill="#333"/></svg>
<div class="t" style="left:70px;top:317.22px;font-size:21px;color:#0c0c18;letter-spacing:-0.04px;">Кан2</div>
<svg style="position:absolute;left:134px;top:318px;" width="40" height="18" viewBox="0 0 40 18"><rect x="1.5" y="1" width="36" height="5" rx="1" fill="#ede56e" stroke="#8f6a08" stroke-width="2"/><rect x="1.5" y="11" width="10" height="5" rx="1" fill="#ede56e" stroke="#8f6a08" stroke-width="2"/><rect x="14.5" y="11" width="10" height="5" rx="1" fill="#ede56e" stroke="#8f6a08" stroke-width="2"/><rect x="27.5" y="11" width="10" height="5" rx="1" fill="#ede56e" stroke="#8f6a08" stroke-width="2"/></svg>
<div style="position:absolute;left:180px;top:294px;width:49px;height:61px;border:2px solid #4e5464;border-radius:7px;background:linear-gradient(#b6bbc9 0px,#cdd2e0 10px,#d2d7e8 50px,#d8ddee 61px)"></div>
<div style="position:absolute;left:188px;top:310px;width:38px;height:35px;background:#f0e86a;border:2px solid #8f5e08;border-radius:2px"></div>
<div class="t" style="left:192px;top:315.53px;font-size:23px;color:#000;letter-spacing:0.52px;">AR</div>
<svg style="position:absolute;left:242px;top:309px;" width="38" height="38" viewBox="0 0 38 38"><polygon points="1,2 37,2 19,36" fill="#ede56e" stroke="#8f6a08" stroke-width="2.2" stroke-linejoin="round"/></svg>
<div class="t" style="left:296px;top:305.02px;font-size:21px;color:#0c0c18;letter-spacing:0.68px;">Диапазон:</div>
<div class="t" style="left:331.25px;top:333.22px;font-size:21px;color:#0c0c18;">4 В</div>
<svg style="position:absolute;left:418px;top:309px;" width="38" height="38" viewBox="0 0 38 38"><polygon points="19,2 37,34 1,34" fill="#ede56e" stroke="#8f6a08" stroke-width="2.2" stroke-linejoin="round"/></svg>
<div style="position:absolute;left:466px;top:296px;width:2px;height:62px;background:#868a96"></div>
<div class="t" style="left:483px;top:305.02px;font-size:21px;color:#0c0c18;letter-spacing:0.53px;">Probe:</div>
<div class="t" style="left:483px;top:333.22px;font-size:21px;color:#0c0c18;letter-spacing:0.41px;">1x</div>
<svg style="position:absolute;left:563px;top:308px;" width="44" height="40" viewBox="0 0 44 40"><path d="M0,20 L6,20 M36,20 L43,20" stroke="#8f6a08" stroke-width="2"/><polygon points="6,1 36,20 6,39" fill="#ede56e" stroke="#8f6a08" stroke-width="2" stroke-linejoin="round"/><text x="17" y="25" text-anchor="middle" font-family="Liberation Sans" font-size="13" font-weight="bold" fill="#000">-1</text></svg>
<div style="position:absolute;left:613px;top:296px;width:2px;height:62px;background:#868a96"></div>
<div class="t" style="left:629px;top:305.02px;font-size:21px;color:#0c0c18;letter-spacing:0.66px;">Демо сигнал:</div>
<div class="t" style="left:629px;top:333.22px;font-size:21px;color:#0c0c18;letter-spacing:0.63px;">Квадрат</div>
<svg style="position:absolute;left:1603px;top:232px;" width="40" height="40" viewBox="0 0 40 40"><circle cx="20" cy="20" r="18.5" fill="#eef0f6" opacity="0.7"/><circle cx="20" cy="20" r="17" fill="#8c8c8c"/><circle cx="20" cy="20" r="14.5" fill="#b4b4b4"/><circle cx="20" cy="20" r="12.5" fill="#888"/><circle cx="20" cy="20" r="11" fill="#f4f000"/><circle cx="20" cy="20" r="5.5" fill="#f4f000"/><rect x="19" y="19.5" width="2.5" height="2" fill="#333"/></svg>
<div class="t" style="left:1652px;top:241.22px;font-size:21px;color:#0c0c18;letter-spacing:-0.04px;">Кан3</div>
<svg style="position:absolute;left:1716px;top:242px;" width="40" height="18" viewBox="0 0 40 18"><rect x="1.5" y="1" width="36" height="5" rx="1" fill="#ede56e" stroke="#8f6a08" stroke-width="2"/><rect x="1.5" y="11" width="10" height="5" rx="1" fill="#ede56e" stroke="#8f6a08" stroke-width="2"/><rect x="14.5" y="11" width="10" height="5" rx="1" fill="#ede56e" stroke="#8f6a08" stroke-width="2"/><rect x="27.5" y="11" width="10" height="5" rx="1" fill="#ede56e" stroke="#8f6a08" stroke-width="2"/></svg>
<div style="position:absolute;left:1762px;top:218px;width:49px;height:61px;border:2px solid #4e5464;border-radius:7px;background:linear-gradient(#b6bbc9 0px,#cdd2e0 10px,#d2d7e8 50px,#d8ddee 61px)"></div>
<div style="position:absolute;left:1770px;top:234px;width:38px;height:35px;background:#f0e86a;border:2px solid #8f5e08;border-radius:2px"></div>
<div class="t" style="left:1774px;top:239.53px;font-size:23px;color:#000;letter-spacing:0.52px;">AR</div>
<svg style="position:absolute;left:1824px;top:233px;" width="38" height="38" viewBox="0 0 38 38"><polygon points="1,2 37,2 19,36" fill="#ede56e" stroke="#8f6a08" stroke-width="2.2" stroke-linejoin="round"/></svg>
<div class="t" style="left:1878px;top:229.02px;font-size:21px;color:#0c0c18;letter-spacing:0.68px;">Диапазон:</div>
<div class="t" style="left:1907.4140625px;top:257.22px;font-size:21px;color:#0c0c18;">80 В</div>
<svg style="position:absolute;left:2000px;top:233px;" width="38" height="38" viewBox="0 0 38 38"><polygon points="19,2 37,34 1,34" fill="#d5d9e6" stroke="#a8adb8" stroke-width="2.2" stroke-linejoin="round"/></svg>
<div style="position:absolute;left:2048px;top:220px;width:2px;height:62px;background:#868a96"></div>
<div class="t" style="left:2065px;top:229.02px;font-size:21px;color:#0c0c18;letter-spacing:0.53px;">Probe:</div>
<div class="t" style="left:2065px;top:257.22px;font-size:21px;color:#0c0c18;letter-spacing:0.41px;">1x</div>
<svg style="position:absolute;left:2145px;top:232px;" width="44" height="40" viewBox="0 0 44 40"><path d="M0,20 L6,20 M36,20 L43,20" stroke="#8f6a08" stroke-width="2"/><polygon points="6,1 36,20 6,39" fill="#ede56e" stroke="#8f6a08" stroke-width="2" stroke-linejoin="round"/><text x="17" y="25" text-anchor="middle" font-family="Liberation Sans" font-size="13" font-weight="bold" fill="#000">-1</text></svg>
<div style="position:absolute;left:2195px;top:220px;width:2px;height:62px;background:#868a96"></div>
<div class="t" style="left:2211px;top:229.02px;font-size:21px;color:#0c0c18;letter-spacing:0.66px;">Демо сигнал:</div>
<div class="t" style="left:2211px;top:257.22px;font-size:21px;color:#0c0c18;letter-spacing:0.97px;">Треугольник</div>
<svg style="position:absolute;left:1603px;top:308px;" width="40" height="40" viewBox="0 0 40 40"><circle cx="20" cy="20" r="18.5" fill="#eef0f6" opacity="0.7"/><circle cx="20" cy="20" r="17" fill="#8c8c8c"/><circle cx="20" cy="20" r="14.5" fill="#b4b4b4"/><circle cx="20" cy="20" r="12.5" fill="#888"/><circle cx="20" cy="20" r="11" fill="#ee1010"/><circle cx="20" cy="20" r="5.5" fill="#f4f000"/><rect x="19" y="19.5" width="2.5" height="2" fill="#333"/></svg>
<div class="t" style="left:1652px;top:317.22px;font-size:21px;color:#0c0c18;letter-spacing:-0.04px;">Кан4</div>
<svg style="position:absolute;left:1716px;top:318px;" width="40" height="18" viewBox="0 0 40 18"><rect x="1.5" y="1" width="36" height="5" rx="1" fill="#ede56e" stroke="#8f6a08" stroke-width="2"/><rect x="1.5" y="11" width="10" height="5" rx="1" fill="#ede56e" stroke="#8f6a08" stroke-width="2"/><rect x="14.5" y="11" width="10" height="5" rx="1" fill="#ede56e" stroke="#8f6a08" stroke-width="2"/><rect x="27.5" y="11" width="10" height="5" rx="1" fill="#ede56e" stroke="#8f6a08" stroke-width="2"/></svg>
<div style="position:absolute;left:1762px;top:294px;width:49px;height:61px;border:2px solid #4e5464;border-radius:7px;background:linear-gradient(#b6bbc9 0px,#cdd2e0 10px,#d2d7e8 50px,#d8ddee 61px)"></div>
<div style="position:absolute;left:1770px;top:310px;width:38px;height:35px;background:#f0e86a;border:2px solid #8f5e08;border-radius:2px"></div>
<div class="t" style="left:1774px;top:315.53px;font-size:23px;color:#000;letter-spacing:0.52px;">AR</div>
<svg style="position:absolute;left:1824px;top:309px;" width="38" height="38" viewBox="0 0 38 38"><polygon points="1,2 37,2 19,36" fill="#ede56e" stroke="#8f6a08" stroke-width="2.2" stroke-linejoin="round"/></svg>
<div class="t" style="left:1878px;top:305.02px;font-size:21px;color:#0c0c18;letter-spacing:0.68px;">Диапазон:</div>
<div class="t" style="left:1907.4140625px;top:333.22px;font-size:21px;color:#0c0c18;">80 В</div>
<svg style="position:absolute;left:2000px;top:309px;" width="38" height="38" viewBox="0 0 38 38"><polygon points="19,2 37,34 1,34" fill="#d5d9e6" stroke="#a8adb8" stroke-width="2.2" stroke-linejoin="round"/></svg>
<div style="position:absolute;left:2048px;top:296px;width:2px;height:62px;background:#868a96"></div>
<div class="t" style="left:2065px;top:305.02px;font-size:21px;color:#0c0c18;letter-spacing:0.53px;">Probe:</div>
<div class="t" style="left:2065px;top:333.22px;font-size:21px;color:#0c0c18;letter-spacing:0.41px;">1x</div>
<svg style="position:absolute;left:2145px;top:308px;" width="44" height="40" viewBox="0 0 44 40"><path d="M0,20 L6,20 M36,20 L43,20" stroke="#8f6a08" stroke-width="2"/><polygon points="6,1 36,20 6,39" fill="#ede56e" stroke="#8f6a08" stroke-width="2" stroke-linejoin="round"/><text x="17" y="25" text-anchor="middle" font-family="Liberation Sans" font-size="13" font-weight="bold" fill="#000">-1</text></svg>
<div style="position:absolute;left:2195px;top:296px;width:2px;height:62px;background:#868a96"></div>
<div class="t" style="left:2211px;top:305.02px;font-size:21px;color:#0c0c18;letter-spacing:0.66px;">Демо сигнал:</div>
<div class="t" style="left:2211px;top:333.22px;font-size:21px;color:#0c0c18;letter-spacing:0.63px;">Квадрат</div>
<svg style="position:absolute;left:1180px;top:223px;" width="168" height="56" viewBox="0 0 168 56"><rect x="2" y="2" width="162" height="52" fill="#e4e4e4" stroke="#7a7a7a" stroke-width="4"/><path d="M2,50 L24,50 L24,16 L56,16 L56,50 L90,50 L90,16 L110,16" stroke="#1a86ff" stroke-width="8" fill="none"/><path d="M120,50 L166,50" stroke="#1a86ff" stroke-width="8"/><path d="M2,26 Q22,-8 46,14 Q56,24 64,26 Q76,28 88,14 Q100,0 112,6 Q120,10 128,16" stroke="#13a313" stroke-width="7" fill="none"/><polygon points="132,2 148,2 148,22 166,22 140,53 113,22 132,22" fill="#00cc00" stroke="#fff" stroke-width="4.5" stroke-linejoin="miter"/></svg>
<div class="t" style="left:1353px;top:240.22px;font-size:21px;color:#0c0c18;letter-spacing:-0.49px;">Quick Setup...</div>
<div style="position:absolute;left:0px;top:365px;width:2352px;height:857px;background:#f0f0f0"></div>
<svg style="position:absolute;left:6px;top:371px;" width="12" height="12" viewBox="0 0 12 12"><polygon points="1,1 10,5 1,10 2.5,5.5" fill="#000"/></svg>
<div style="position:absolute;left:7px;top:384px;width:6px;height:830px;background:linear-gradient(90deg,#9a9a9a,#aaaaaa)"></div>
<div style="position:absolute;left:19px;top:366px;width:2px;height:857px;background:linear-gradient(90deg,#a0a0a0,#ffffff)"></div>
<div style="position:absolute;left:0px;top:1221px;width:2362px;height:2px;background:linear-gradient(#a8a8a8,#ffffff)"></div>
<div style="position:absolute;left:0px;top:1223px;width:2362px;height:23px;background:#efecea"></div>
<div style="position:absolute;left:31px;top:372px;width:72px;height:24px;background:#00ff00"></div>
<div style="position:absolute;left:107px;top:372px;width:89px;height:24px;background:#00ffff"></div>
<div style="position:absolute;left:103px;top:370px;width:3px;height:26px;background:linear-gradient(90deg,#888,#ccc)"></div>
<div style="position:absolute;left:195px;top:370px;width:4px;height:810px;background:#a2a2a2"></div>
<div style="position:absolute;left:31px;top:396px;width:164px;height:783px;background:#000"></div>
<div style="position:absolute;left:29px;top:1179px;width:166px;height:3px;background:#999"></div>
<div style="position:absolute;left:197px;top:370px;width:2089px;height:65px;background:linear-gradient(#8e8e8e 0px,#8e8e8e 1px,#ffffff 2px,#f6f7fb 6px,#e6e9f4 17px,#dfe3f0 19px,#d3d8eb 21px,#d6dbed 40px,#e2e6f3 58px,#e6e9f4 61px,#a0a0a0 63px,#ffffff 64px);border-left:2px solid #8e8e8e;border-right:2px solid #9c9c9c"></div>
<div style="position:absolute;left:199px;top:372px;width:2px;height:61px;background:#fff"></div>
<div style="position:absolute;left:199px;top:436px;width:2091px;height:718px;background:#000"></div>
<div style="position:absolute;left:2290px;top:436px;width:2px;height:745px;background:#fff"></div>
<div style="position:absolute;left:199px;top:1154px;width:2091px;height:27px;background:#000"></div>
<div style="position:absolute;left:226px;top:1155px;width:2033px;height:24px;background:#efefef;border-top:1px solid #fff;border-left:1px solid #fff"></div>
<div style="position:absolute;left:200px;top:1155px;width:25px;height:24px;background:#efefef;border-top:1px solid #fff;border-left:1px solid #fff"></div>
<div style="position:absolute;left:2261px;top:1155px;width:26px;height:24px;background:#efefef;border-top:1px solid #fff;border-left:1px solid #fff"></div>
<svg style="position:absolute;left:205px;top:1160px;" width="14" height="14" viewBox="0 0 14 14"><polygon points="11,2 11,12 2,7" fill="#000"/></svg>
<svg style="position:absolute;left:2268px;top:1160px;" width="14" height="14" viewBox="0 0 14 14"><polygon points="3,2 3,12 12,7" fill="#000"/></svg>
<svg style="position:absolute;left:317px;top:1156px;" width="24" height="14" viewBox="0 0 24 14"><polygon points="12,2 22,12 2,12" fill="#000"/></svg>
<div style="position:absolute;left:31px;top:1183px;width:2327px;height:33px;background:#000;border-bottom:2px solid #8a8a8a;border-right:1px solid #9a9a9a"></div>
<div class="t" style="left:164.484375px;top:1191.42px;font-size:19px;color:#fff;-webkit-text-stroke:0">-20.0 μs</div>
<div class="t" style="left:376.6484375px;top:1191.42px;font-size:19px;color:#fff;-webkit-text-stroke:0">20.0 μs</div>
<div class="t" style="left:585.6484375px;top:1191.42px;font-size:19px;color:#fff;-webkit-text-stroke:0">60.0 μs</div>
<div class="t" style="left:789.3671875px;top:1191.42px;font-size:19px;color:#fff;-webkit-text-stroke:0">100.0 μs</div>
<div class="t" style="left:998.3671875px;top:1191.42px;font-size:19px;color:#fff;-webkit-text-stroke:0">140.0 μs</div>
<div class="t" style="left:1207.3671875px;top:1191.42px;font-size:19px;color:#fff;-webkit-text-stroke:0">180.0 μs</div>
<div class="t" style="left:1416.3671875px;top:1191.42px;font-size:19px;color:#fff;-webkit-text-stroke:0">220.0 μs</div>
<div class="t" style="left:1625.3671875px;top:1191.42px;font-size:19px;color:#fff;-webkit-text-stroke:0">260.0 μs</div>
<div class="t" style="left:1834.3671875px;top:1191.42px;font-size:19px;color:#fff;-webkit-text-stroke:0">300.0 μs</div>
<div class="t" style="left:2043.3671875px;top:1191.42px;font-size:19px;color:#fff;-webkit-text-stroke:0">340.0 μs</div>
<div class="t" style="left:2252.3671875px;top:1191.42px;font-size:19px;color:#fff;-webkit-text-stroke:0">380.0 μs</div>
<svg style="position:absolute;left:212px;top:382px;" width="43" height="42" viewBox="0 0 43 42"><rect x="0" y="0" width="43" height="42" fill="#000"/><path d="M4,22 L20,8 L40,18" stroke="#00ff00" stroke-width="3" fill="none"/><path d="M20,3 L20,38" stroke="#fff" stroke-width="2"/><text x="5" y="37" font-family="Liberation Sans" font-size="17" fill="#fff">0</text></svg>
<div style="position:absolute;left:263px;top:377px;width:2px;height:52px;background:#9a9ea8"></div>
<svg style="position:absolute;left:276px;top:383px;" width="44" height="42" viewBox="0 0 44 42"><path d="M14,4 L42,4 M14,20 L42,20 M14,36 L42,36" stroke="#888" stroke-width="1.5"/><rect x="1" y="0" width="13" height="9" fill="#00ee00" stroke="#0a0" stroke-width="1"/><rect x="1" y="16" width="13" height="9" fill="#00ffff" stroke="#0aa" stroke-width="1"/><rect x="1" y="32" width="13" height="9" fill="#1a8cff" stroke="#05a" stroke-width="1"/><path d="M32,6 L32,18 M32,22 L32,34" stroke="#000" stroke-width="2"/><path d="M28,9 L32,4 L36,9 M28,15 L32,20 L36,15 M28,25 L32,21 L36,25 M28,31 L32,36 L36,31" stroke="#000" stroke-width="1.5" fill="none"/></svg>
<div style="position:absolute;left:327px;top:377px;width:2px;height:52px;background:#9a9ea8"></div>
<svg style="position:absolute;left:341px;top:382px;" width="42" height="42" viewBox="0 0 42 42"><rect x="1" y="1" width="40" height="40" fill="#fff" stroke="#888" stroke-width="1.5"/><rect x="2" y="2" width="38" height="7" fill="#bbb"/><path d="M5,13 L15,13 M5,18 L15,18 M5,23 L15,23 M20,13 L25,13 M20,18 L25,18 M20,23 L25,23 M30,13 L36,13 M30,18 L36,18 M30,23 L36,23 M5,35 L10,35 M14,35 L19,35 M23,35 L28,35 M32,35 L36,35" stroke="#000" stroke-width="2"/><path d="M1,28 L41,28" stroke="#888" stroke-width="1.5"/></svg>
<svg style="position:absolute;left:394px;top:382px;" width="42" height="42" viewBox="0 0 42 42"><rect width="42" height="42" fill="#000"/><path d="M2,22 L21,6 L40,18" stroke="#00ff00" stroke-width="3" fill="none"/><path d="M9,4 L9,38 M32,4 L32,38" stroke="#fff" stroke-width="2"/></svg>
<svg style="position:absolute;left:448px;top:382px;" width="42" height="42" viewBox="0 0 42 42"><rect width="42" height="42" fill="#000"/><path d="M2,22 L20,6 L40,18" stroke="#00ff00" stroke-width="3" fill="none"/><path d="M4,9 L38,9 M4,32 L38,32" stroke="#fff" stroke-width="2"/></svg>
<svg style="position:absolute;left:501px;top:382px;" width="42" height="42" viewBox="0 0 42 42"><rect width="42" height="42" fill="#a4a8b2"/><path d="M9,4 L9,38 M32,4 L32,38 M3,9 L39,9 M3,32 L39,32" stroke="#fff" stroke-width="1.5"/><path d="M13,21 Q13,13 21,13 Q26,13 28,17 M29,21 Q29,29 21,29 Q16,29 14,25" stroke="#c4c8d0" stroke-width="3" fill="none"/></svg>
<div style="position:absolute;left:551px;top:377px;width:2px;height:52px;background:#9a9ea8"></div>
<svg style="position:absolute;left:0px;top:0px;pointer-events:none" width="2362" height="1246" viewBox="0 0 2362 1246"><path d="M589,406 L603,420" stroke="#ff0000" stroke-width="5.5" stroke-linecap="round"/><circle cx="580" cy="397" r="13.5" fill="#f0fcfc" stroke="#111" stroke-width="2.6"/><path d="M573,397 L587,397 M580,390 L580,404" stroke="#000" stroke-width="2.2"/><path d="M643,406 L657,420" stroke="#a4a8b0" stroke-width="5.5" stroke-linecap="round"/><circle cx="634" cy="397" r="13.5" fill="#dde2ee" stroke="#aeb2ba" stroke-width="1.8"/><path d="M627,397 L641,397" stroke="#aeb2ba" stroke-width="1.8"/><path d="M696,406 L710,420" stroke="#ff0000" stroke-width="5.5" stroke-linecap="round"/><circle cx="687" cy="397" r="13.5" fill="#f0fcfc" stroke="#111" stroke-width="2.6"/><path d="M682,390 L682,404 M692,390 L692,404" stroke="#000" stroke-width="2.5"/><rect x="686" y="392" width="2" height="2" fill="#000"/><rect x="686" y="399" width="2" height="2" fill="#000"/></svg>
<div style="position:absolute;left:723px;top:377px;width:2px;height:52px;background:#9a9ea8"></div>
<svg style="position:absolute;left:738px;top:386px;" width="44" height="40" viewBox="0 0 44 40"><path d="M3,19 Q22,4 41,19 Q22,34 3,19 Z" fill="none" stroke="#a8acb4" stroke-width="2.2"/><circle cx="23" cy="18" r="6.5" fill="#a8acb4"/><circle cx="23" cy="18" r="2.2" fill="#d8dce8"/><path d="M4,37 L40,3" stroke="#a8acb4" stroke-width="2.2"/><path d="M3,14 L17,1 L41,22 L28,37 Z" fill="none" stroke="#b4b8c0" stroke-width="1.4"/></svg>
<div style="position:absolute;left:1826px;top:372px;width:2px;height:61px;background:linear-gradient(#fff,#e8eaf2)"></div>
<svg style="position:absolute;left:1882px;top:382px;" width="46" height="44" viewBox="0 0 46 44"><rect x="1" y="1" width="41" height="22" rx="5" fill="#fff89a" stroke="#000" stroke-width="2"/><text x="5" y="11" font-family="Liberation Sans" font-size="8" fill="#777">Comment</text><text x="5" y="20" font-family="Liberation Sans" font-size="8" fill="#777">Text</text><rect x="18" y="21" width="6" height="3" fill="#f00"/><path d="M22,24 L38,38" stroke="#000" stroke-width="2.5"/><polygon points="42,42 32,40 40,32" fill="#000"/></svg>
<svg style="position:absolute;left:1936px;top:383px;" width="44" height="42" viewBox="0 0 44 42"><path d="M6,4 L38,38 M38,4 L6,38" stroke="#b4b8c2" stroke-width="7"/><rect x="6" y="8" width="32" height="26" fill="none" stroke="#b4b8c2" stroke-width="3" rx="6"/></svg>
<div style="position:absolute;left:1987px;top:376px;width:2px;height:54px;background:#6a6e78"></div>
<svg style="position:absolute;left:2000px;top:382px;" width="42" height="42" viewBox="0 0 42 42"><rect width="42" height="42" fill="#000" stroke="#333"/><rect x="5" y="6" width="5" height="5" fill="#00ff00"/><rect x="5" y="17" width="5" height="5" fill="#00ffff"/><text x="12" y="13" font-family="Liberation Sans" font-size="11" fill="#ccc">Ch1</text><text x="12" y="24" font-family="Liberation Sans" font-size="11" fill="#ccc">Ch2</text></svg>
<svg style="position:absolute;left:2054px;top:382px;" width="42" height="42" viewBox="0 0 42 42"><rect width="42" height="42" fill="#000"/><path d="M2,22 Q10,-6 18,20 Q24,34 40,20" stroke="#00ff00" stroke-width="3" fill="none"/><path d="M2,24 Q10,38 20,26 Q30,14 40,28" stroke="#00ffff" stroke-width="3" fill="none"/></svg>
<svg style="position:absolute;left:2108px;top:382px;" width="42" height="42" viewBox="0 0 42 42"><rect x="1" y="1" width="40" height="40" fill="none" stroke="#b4b8c2" stroke-width="1.5"/><rect x="4" y="22" width="22" height="16" fill="#a4a8b2"/><path d="M27,16 L37,6 M31,6 L37,6 L37,12" stroke="#a4a8b2" stroke-width="2" fill="none"/><path d="M1,6 L41,6" stroke="#c8ccd4" stroke-width="1.5"/></svg>
<svg style="position:absolute;left:2160px;top:382px;" width="44" height="44" viewBox="0 0 44 44"><path d="M4,4 L14,0 L30,22 L20,30 Z" fill="#e8901a" stroke="#5a3000" stroke-width="1.5"/><path d="M14,16 L24,8 L32,18 L22,26 Z" fill="#c8c8c8" stroke="#222" stroke-width="1.5"/><path d="M22,26 L32,18 L36,24 L26,32 Z" fill="#a02010" stroke="#222" stroke-width="1"/><ellipse cx="32" cy="36" rx="9" ry="6" fill="#fff"/></svg>
<svg style="position:absolute;left:2214px;top:383px;" width="44" height="42" viewBox="0 0 44 42"><path d="M6,4 L38,38 M38,4 L6,38" stroke="#a4a8b4" stroke-width="9"/><path d="M6,4 L38,38 M38,4 L6,38" stroke="#c4c8d2" stroke-width="6"/></svg>
<div class="t" style="left:2262px;top:386px;font-family:'Liberation Serif',serif;font-weight:bold;font-size:32px;color:#000">1</div>
<div style="position:absolute;left:34px;top:424px;width:69px;height:25px;background:#00ff00;clip-path:polygon(5px 0,calc(100% - 5px) 0,100% 5px,100% calc(100% - 5px),calc(100% - 5px) 100%,5px 100%,0 calc(100% - 5px),0 5px)"></div>
<div class="t" style="left:39.453125px;top:427.84px;font-size:18.5px;color:#000;-webkit-text-stroke:0">4.0000</div>
<div class="t" style="left:61px;top:470.92px;font-size:19px;color:#00ff00;-webkit-text-stroke:0">В</div>
<div class="t" style="left:40.90625px;top:518.92px;font-size:19px;color:#00ff00;-webkit-text-stroke:0">2.0000</div>
<div class="t" style="left:40.90625px;top:608.92px;font-size:19px;color:#00ff00;-webkit-text-stroke:0">0.0000</div>
<div class="t" style="left:34.578125px;top:698.92px;font-size:19px;color:#00ff00;-webkit-text-stroke:0">-2.0000</div>
<div style="position:absolute;left:34px;top:783px;width:69px;height:25px;background:#00ff00;clip-path:polygon(5px 0,calc(100% - 5px) 0,100% 5px,100% calc(100% - 5px),calc(100% - 5px) 100%,5px 100%,0 calc(100% - 5px),0 5px)"></div>
<div class="t" style="left:36.2890625px;top:786.84px;font-size:18.5px;color:#000;-webkit-text-stroke:0">-4.0000</div>
<div class="t" style="left:135px;top:748.92px;font-size:19px;color:#00ffff;-webkit-text-stroke:0">В</div>
<div style="position:absolute;left:108px;top:783px;width:69px;height:25px;background:#00ffff;clip-path:polygon(5px 0,calc(100% - 5px) 0,100% 5px,100% calc(100% - 5px),calc(100% - 5px) 100%,5px 100%,0 calc(100% - 5px),0 5px)"></div>
<div class="t" style="left:113.453125px;top:786.84px;font-size:18.5px;color:#000;-webkit-text-stroke:0">4.0000</div>
<div class="t" style="left:114.90625px;top:876.92px;font-size:19px;color:#00ffff;-webkit-text-stroke:0">2.0000</div>
<div class="t" style="left:114.90625px;top:966.92px;font-size:19px;color:#00ffff;-webkit-text-stroke:0">0.0000</div>
<div class="t" style="left:108.578125px;top:1056.92px;font-size:19px;color:#00ffff;-webkit-text-stroke:0">-2.0000</div>
<div style="position:absolute;left:108px;top:1142px;width:69px;height:25px;background:#00ffff;clip-path:polygon(5px 0,calc(100% - 5px) 0,100% 5px,100% calc(100% - 5px),calc(100% - 5px) 100%,5px 100%,0 calc(100% - 5px),0 5px)"></div>
<div class="t" style="left:110.2890625px;top:1145.84px;font-size:18.5px;color:#000;-webkit-text-stroke:0">-4.0000</div>
<svg style="position:absolute;left:178px;top:905px;" width="18" height="27" viewBox="0 0 18 27"><path d="M3,4 L6,1.5 L10,1.5 L10,22.5 L15,22.5" stroke="#eef2ee" stroke-width="3.6" fill="none" stroke-linejoin="round"/></svg>
<svg style="position:absolute;left:0px;top:0px;pointer-events:none" width="2362" height="1246" viewBox="0 0 2362 1246"><path d="M198.5,524.9h2v2h-2zM240.3,524.9h2v2h-2zM282.1,524.9h2v2h-2zM323.9,524.9h2v2h-2zM365.7,524.9h2v2h-2zM407.5,524.9h2v2h-2zM449.3,524.9h2v2h-2zM491.1,524.9h2v2h-2zM532.9,524.9h2v2h-2zM574.7,524.9h2v2h-2zM616.5,524.9h2v2h-2zM658.3,524.9h2v2h-2zM700.1,524.9h2v2h-2zM741.9,524.9h2v2h-2zM783.7,524.9h2v2h-2zM825.5,524.9h2v2h-2zM867.3,524.9h2v2h-2zM909.1,524.9h2v2h-2zM950.9,524.9h2v2h-2zM992.7,524.9h2v2h-2zM1034.5,524.9h2v2h-2zM1076.3,524.9h2v2h-2zM1118.1,524.9h2v2h-2zM1159.9,524.9h2v2h-2zM1201.7,524.9h2v2h-2zM1243.5,524.9h2v2h-2zM1285.3,524.9h2v2h-2zM1327.1,524.9h2v2h-2zM1368.9,524.9h2v2h-2zM1410.7,524.9h2v2h-2zM1452.5,524.9h2v2h-2zM1494.3,524.9h2v2h-2zM1536.1,524.9h2v2h-2zM1577.9,524.9h2v2h-2zM1619.7,524.9h2v2h-2zM1661.5,524.9h2v2h-2zM1703.3,524.9h2v2h-2zM1745.1,524.9h2v2h-2zM1786.9,524.9h2v2h-2zM1828.7,524.9h2v2h-2zM1870.5,524.9h2v2h-2zM1912.3,524.9h2v2h-2zM1954.1,524.9h2v2h-2zM1995.9,524.9h2v2h-2zM2037.7,524.9h2v2h-2zM2079.5,524.9h2v2h-2zM2121.3,524.9h2v2h-2zM2163.1,524.9h2v2h-2zM2204.9,524.9h2v2h-2zM2246.7,524.9h2v2h-2zM2288.5,524.9h2v2h-2zM198.5,614.8h2v2h-2zM240.3,614.8h2v2h-2zM282.1,614.8h2v2h-2zM323.9,614.8h2v2h-2zM365.7,614.8h2v2h-2zM407.5,614.8h2v2h-2zM449.3,614.8h2v2h-2zM491.1,614.8h2v2h-2zM532.9,614.8h2v2h-2zM574.7,614.8h2v2h-2zM616.5,614.8h2v2h-2zM658.3,614.8h2v2h-2zM700.1,614.8h2v2h-2zM741.9,614.8h2v2h-2zM783.7,614.8h2v2h-2zM825.5,614.8h2v2h-2zM867.3,614.8h2v2h-2zM909.1,614.8h2v2h-2zM950.9,614.8h2v2h-2zM992.7,614.8h2v2h-2zM1034.5,614.8h2v2h-2zM1076.3,614.8h2v2h-2zM1118.1,614.8h2v2h-2zM1159.9,614.8h2v2h-2zM1201.7,614.8h2v2h-2zM1243.5,614.8h2v2h-2zM1285.3,614.8h2v2h-2zM1327.1,614.8h2v2h-2zM1368.9,614.8h2v2h-2zM1410.7,614.8h2v2h-2zM1452.5,614.8h2v2h-2zM1494.3,614.8h2v2h-2zM1536.1,614.8h2v2h-2zM1577.9,614.8h2v2h-2zM1619.7,614.8h2v2h-2zM1661.5,614.8h2v2h-2zM1703.3,614.8h2v2h-2zM1745.1,614.8h2v2h-2zM1786.9,614.8h2v2h-2zM1828.7,614.8h2v2h-2zM1870.5,614.8h2v2h-2zM1912.3,614.8h2v2h-2zM1954.1,614.8h2v2h-2zM1995.9,614.8h2v2h-2zM2037.7,614.8h2v2h-2zM2079.5,614.8h2v2h-2zM2121.3,614.8h2v2h-2zM2163.1,614.8h2v2h-2zM2204.9,614.8h2v2h-2zM2246.7,614.8h2v2h-2zM2288.5,614.8h2v2h-2zM198.5,704.6h2v2h-2zM240.3,704.6h2v2h-2zM282.1,704.6h2v2h-2zM323.9,704.6h2v2h-2zM365.7,704.6h2v2h-2zM407.5,704.6h2v2h-2zM449.3,704.6h2v2h-2zM491.1,704.6h2v2h-2zM532.9,704.6h2v2h-2zM574.7,704.6h2v2h-2zM616.5,704.6h2v2h-2zM658.3,704.6h2v2h-2zM700.1,704.6h2v2h-2zM741.9,704.6h2v2h-2zM783.7,704.6h2v2h-2zM825.5,704.6h2v2h-2zM867.3,704.6h2v2h-2zM909.1,704.6h2v2h-2zM950.9,704.6h2v2h-2zM992.7,704.6h2v2h-2zM1034.5,704.6h2v2h-2zM1076.3,704.6h2v2h-2zM1118.1,704.6h2v2h-2zM1159.9,704.6h2v2h-2zM1201.7,704.6h2v2h-2zM1243.5,704.6h2v2h-2zM1285.3,704.6h2v2h-2zM1327.1,704.6h2v2h-2zM1368.9,704.6h2v2h-2zM1410.7,704.6h2v2h-2zM1452.5,704.6h2v2h-2zM1494.3,704.6h2v2h-2zM1536.1,704.6h2v2h-2zM1577.9,704.6h2v2h-2zM1619.7,704.6h2v2h-2zM1661.5,704.6h2v2h-2zM1703.3,704.6h2v2h-2zM1745.1,704.6h2v2h-2zM1786.9,704.6h2v2h-2zM1828.7,704.6h2v2h-2zM1870.5,704.6h2v2h-2zM1912.3,704.6h2v2h-2zM1954.1,704.6h2v2h-2zM1995.9,704.6h2v2h-2zM2037.7,704.6h2v2h-2zM2079.5,704.6h2v2h-2zM2121.3,704.6h2v2h-2zM2163.1,704.6h2v2h-2zM2204.9,704.6h2v2h-2zM2246.7,704.6h2v2h-2zM2288.5,704.6h2v2h-2zM198.5,794.5h2v2h-2zM240.3,794.5h2v2h-2zM282.1,794.5h2v2h-2zM323.9,794.5h2v2h-2zM365.7,794.5h2v2h-2zM407.5,794.5h2v2h-2zM449.3,794.5h2v2h-2zM491.1,794.5h2v2h-2zM532.9,794.5h2v2h-2zM574.7,794.5h2v2h-2zM616.5,794.5h2v2h-2zM658.3,794.5h2v2h-2zM700.1,794.5h2v2h-2zM741.9,794.5h2v2h-2zM783.7,794.5h2v2h-2zM825.5,794.5h2v2h-2zM867.3,794.5h2v2h-2zM909.1,794.5h2v2h-2zM950.9,794.5h2v2h-2zM992.7,794.5h2v2h-2zM1034.5,794.5h2v2h-2zM1076.3,794.5h2v2h-2zM1118.1,794.5h2v2h-2zM1159.9,794.5h2v2h-2zM1201.7,794.5h2v2h-2zM1243.5,794.5h2v2h-2zM1285.3,794.5h2v2h-2zM1327.1,794.5h2v2h-2zM1368.9,794.5h2v2h-2zM1410.7,794.5h2v2h-2zM1452.5,794.5h2v2h-2zM1494.3,794.5h2v2h-2zM1536.1,794.5h2v2h-2zM1577.9,794.5h2v2h-2zM1619.7,794.5h2v2h-2zM1661.5,794.5h2v2h-2zM1703.3,794.5h2v2h-2zM1745.1,794.5h2v2h-2zM1786.9,794.5h2v2h-2zM1828.7,794.5h2v2h-2zM1870.5,794.5h2v2h-2zM1912.3,794.5h2v2h-2zM1954.1,794.5h2v2h-2zM1995.9,794.5h2v2h-2zM2037.7,794.5h2v2h-2zM2079.5,794.5h2v2h-2zM2121.3,794.5h2v2h-2zM2163.1,794.5h2v2h-2zM2204.9,794.5h2v2h-2zM2246.7,794.5h2v2h-2zM2288.5,794.5h2v2h-2zM198.5,884.4h2v2h-2zM240.3,884.4h2v2h-2zM282.1,884.4h2v2h-2zM323.9,884.4h2v2h-2zM365.7,884.4h2v2h-2zM407.5,884.4h2v2h-2zM449.3,884.4h2v2h-2zM491.1,884.4h2v2h-2zM532.9,884.4h2v2h-2zM574.7,884.4h2v2h-2zM616.5,884.4h2v2h-2zM658.3,884.4h2v2h-2zM700.1,884.4h2v2h-2zM741.9,884.4h2v2h-2zM783.7,884.4h2v2h-2zM825.5,884.4h2v2h-2zM867.3,884.4h2v2h-2zM909.1,884.4h2v2h-2zM950.9,884.4h2v2h-2zM992.7,884.4h2v2h-2zM1034.5,884.4h2v2h-2zM1076.3,884.4h2v2h-2zM1118.1,884.4h2v2h-2zM1159.9,884.4h2v2h-2zM1201.7,884.4h2v2h-2zM1243.5,884.4h2v2h-2zM1285.3,884.4h2v2h-2zM1327.1,884.4h2v2h-2zM1368.9,884.4h2v2h-2zM1410.7,884.4h2v2h-2zM1452.5,884.4h2v2h-2zM1494.3,884.4h2v2h-2zM1536.1,884.4h2v2h-2zM1577.9,884.4h2v2h-2zM1619.7,884.4h2v2h-2zM1661.5,884.4h2v2h-2zM1703.3,884.4h2v2h-2zM1745.1,884.4h2v2h-2zM1786.9,884.4h2v2h-2zM1828.7,884.4h2v2h-2zM1870.5,884.4h2v2h-2zM1912.3,884.4h2v2h-2zM1954.1,884.4h2v2h-2zM1995.9,884.4h2v2h-2zM2037.7,884.4h2v2h-2zM2079.5,884.4h2v2h-2zM2121.3,884.4h2v2h-2zM2163.1,884.4h2v2h-2zM2204.9,884.4h2v2h-2zM2246.7,884.4h2v2h-2zM2288.5,884.4h2v2h-2zM198.5,974.2h2v2h-2zM240.3,974.2h2v2h-2zM282.1,974.2h2v2h-2zM323.9,974.2h2v2h-2zM365.7,974.2h2v2h-2zM407.5,974.2h2v2h-2zM449.3,974.2h2v2h-2zM491.1,974.2h2v2h-2zM532.9,974.2h2v2h-2zM574.7,974.2h2v2h-2zM616.5,974.2h2v2h-2zM658.3,974.2h2v2h-2zM700.1,974.2h2v2h-2zM741.9,974.2h2v2h-2zM783.7,974.2h2v2h-2zM825.5,974.2h2v2h-2zM867.3,974.2h2v2h-2zM909.1,974.2h2v2h-2zM950.9,974.2h2v2h-2zM992.7,974.2h2v2h-2zM1034.5,974.2h2v2h-2zM1076.3,974.2h2v2h-2zM1118.1,974.2h2v2h-2zM1159.9,974.2h2v2h-2zM1201.7,974.2h2v2h-2zM1243.5,974.2h2v2h-2zM1285.3,974.2h2v2h-2zM1327.1,974.2h2v2h-2zM1368.9,974.2h2v2h-2zM1410.7,974.2h2v2h-2zM1452.5,974.2h2v2h-2zM1494.3,974.2h2v2h-2zM1536.1,974.2h2v2h-2zM1577.9,974.2h2v2h-2zM1619.7,974.2h2v2h-2zM1661.5,974.2h2v2h-2zM1703.3,974.2h2v2h-2zM1745.1,974.2h2v2h-2zM1786.9,974.2h2v2h-2zM1828.7,974.2h2v2h-2zM1870.5,974.2h2v2h-2zM1912.3,974.2h2v2h-2zM1954.1,974.2h2v2h-2zM1995.9,974.2h2v2h-2zM2037.7,974.2h2v2h-2zM2079.5,974.2h2v2h-2zM2121.3,974.2h2v2h-2zM2163.1,974.2h2v2h-2zM2204.9,974.2h2v2h-2zM2246.7,974.2h2v2h-2zM2288.5,974.2h2v2h-2zM198.5,1064.1h2v2h-2zM240.3,1064.1h2v2h-2zM282.1,1064.1h2v2h-2zM323.9,1064.1h2v2h-2zM365.7,1064.1h2v2h-2zM407.5,1064.1h2v2h-2zM449.3,1064.1h2v2h-2zM491.1,1064.1h2v2h-2zM532.9,1064.1h2v2h-2zM574.7,1064.1h2v2h-2zM616.5,1064.1h2v2h-2zM658.3,1064.1h2v2h-2zM700.1,1064.1h2v2h-2zM741.9,1064.1h2v2h-2zM783.7,1064.1h2v2h-2zM825.5,1064.1h2v2h-2zM867.3,1064.1h2v2h-2zM909.1,1064.1h2v2h-2zM950.9,1064.1h2v2h-2zM992.7,1064.1h2v2h-2zM1034.5,1064.1h2v2h-2zM1076.3,1064.1h2v2h-2zM1118.1,1064.1h2v2h-2zM1159.9,1064.1h2v2h-2zM1201.7,1064.1h2v2h-2zM1243.5,1064.1h2v2h-2zM1285.3,1064.1h2v2h-2zM1327.1,1064.1h2v2h-2zM1368.9,1064.1h2v2h-2zM1410.7,1064.1h2v2h-2zM1452.5,1064.1h2v2h-2zM1494.3,1064.1h2v2h-2zM1536.1,1064.1h2v2h-2zM1577.9,1064.1h2v2h-2zM1619.7,1064.1h2v2h-2zM1661.5,1064.1h2v2h-2zM1703.3,1064.1h2v2h-2zM1745.1,1064.1h2v2h-2zM1786.9,1064.1h2v2h-2zM1828.7,1064.1h2v2h-2zM1870.5,1064.1h2v2h-2zM1912.3,1064.1h2v2h-2zM1954.1,1064.1h2v2h-2zM1995.9,1064.1h2v2h-2zM2037.7,1064.1h2v2h-2zM2079.5,1064.1h2v2h-2zM2121.3,1064.1h2v2h-2zM2163.1,1064.1h2v2h-2zM2204.9,1064.1h2v2h-2zM2246.7,1064.1h2v2h-2zM2288.5,1064.1h2v2h-2zM407.5,435.0h2v2h-2zM407.5,453.0h2v2h-2zM407.5,470.9h2v2h-2zM407.5,488.9h2v2h-2zM407.5,506.9h2v2h-2zM407.5,524.9h2v2h-2zM407.5,542.9h2v2h-2zM407.5,560.8h2v2h-2zM407.5,578.8h2v2h-2zM407.5,596.8h2v2h-2zM407.5,614.8h2v2h-2zM407.5,632.7h2v2h-2zM407.5,650.7h2v2h-2zM407.5,668.7h2v2h-2zM407.5,686.7h2v2h-2zM407.5,704.6h2v2h-2zM407.5,722.6h2v2h-2zM407.5,740.6h2v2h-2zM407.5,758.5h2v2h-2zM407.5,776.5h2v2h-2zM407.5,794.5h2v2h-2zM407.5,812.5h2v2h-2zM407.5,830.5h2v2h-2zM407.5,848.4h2v2h-2zM407.5,866.4h2v2h-2zM407.5,884.4h2v2h-2zM407.5,902.4h2v2h-2zM407.5,920.3h2v2h-2zM407.5,938.3h2v2h-2zM407.5,956.3h2v2h-2zM407.5,974.2h2v2h-2zM407.5,992.2h2v2h-2zM407.5,1010.2h2v2h-2zM407.5,1028.2h2v2h-2zM407.5,1046.2h2v2h-2zM407.5,1064.1h2v2h-2zM407.5,1082.1h2v2h-2zM407.5,1100.1h2v2h-2zM407.5,1118.1h2v2h-2zM407.5,1136.0h2v2h-2zM407.5,1154.0h2v2h-2zM616.5,435.0h2v2h-2zM616.5,453.0h2v2h-2zM616.5,470.9h2v2h-2zM616.5,488.9h2v2h-2zM616.5,506.9h2v2h-2zM616.5,524.9h2v2h-2zM616.5,542.9h2v2h-2zM616.5,560.8h2v2h-2zM616.5,578.8h2v2h-2zM616.5,596.8h2v2h-2zM616.5,614.8h2v2h-2zM616.5,632.7h2v2h-2zM616.5,650.7h2v2h-2zM616.5,668.7h2v2h-2zM616.5,686.7h2v2h-2zM616.5,704.6h2v2h-2zM616.5,722.6h2v2h-2zM616.5,740.6h2v2h-2zM616.5,758.5h2v2h-2zM616.5,776.5h2v2h-2zM616.5,794.5h2v2h-2zM616.5,812.5h2v2h-2zM616.5,830.5h2v2h-2zM616.5,848.4h2v2h-2zM616.5,866.4h2v2h-2zM616.5,884.4h2v2h-2zM616.5,902.4h2v2h-2zM616.5,920.3h2v2h-2zM616.5,938.3h2v2h-2zM616.5,956.3h2v2h-2zM616.5,974.2h2v2h-2zM616.5,992.2h2v2h-2zM616.5,1010.2h2v2h-2zM616.5,1028.2h2v2h-2zM616.5,1046.2h2v2h-2zM616.5,1064.1h2v2h-2zM616.5,1082.1h2v2h-2zM616.5,1100.1h2v2h-2zM616.5,1118.1h2v2h-2zM616.5,1136.0h2v2h-2zM616.5,1154.0h2v2h-2zM825.5,435.0h2v2h-2zM825.5,453.0h2v2h-2zM825.5,470.9h2v2h-2zM825.5,488.9h2v2h-2zM825.5,506.9h2v2h-2zM825.5,524.9h2v2h-2zM825.5,542.9h2v2h-2zM825.5,560.8h2v2h-2zM825.5,578.8h2v2h-2zM825.5,596.8h2v2h-2zM825.5,614.8h2v2h-2zM825.5,632.7h2v2h-2zM825.5,650.7h2v2h-2zM825.5,668.7h2v2h-2zM825.5,686.7h2v2h-2zM825.5,704.6h2v2h-2zM825.5,722.6h2v2h-2zM825.5,740.6h2v2h-2zM825.5,758.5h2v2h-2zM825.5,776.5h2v2h-2zM825.5,794.5h2v2h-2zM825.5,812.5h2v2h-2zM825.5,830.5h2v2h-2zM825.5,848.4h2v2h-2zM825.5,866.4h2v2h-2zM825.5,884.4h2v2h-2zM825.5,902.4h2v2h-2zM825.5,920.3h2v2h-2zM825.5,938.3h2v2h-2zM825.5,956.3h2v2h-2zM825.5,974.2h2v2h-2zM825.5,992.2h2v2h-2zM825.5,1010.2h2v2h-2zM825.5,1028.2h2v2h-2zM825.5,1046.2h2v2h-2zM825.5,1064.1h2v2h-2zM825.5,1082.1h2v2h-2zM825.5,1100.1h2v2h-2zM825.5,1118.1h2v2h-2zM825.5,1136.0h2v2h-2zM825.5,1154.0h2v2h-2zM1034.5,435.0h2v2h-2zM1034.5,453.0h2v2h-2zM1034.5,470.9h2v2h-2zM1034.5,488.9h2v2h-2zM1034.5,506.9h2v2h-2zM1034.5,524.9h2v2h-2zM1034.5,542.9h2v2h-2zM1034.5,560.8h2v2h-2zM1034.5,578.8h2v2h-2zM1034.5,596.8h2v2h-2zM1034.5,614.8h2v2h-2zM1034.5,632.7h2v2h-2zM1034.5,650.7h2v2h-2zM1034.5,668.7h2v2h-2zM1034.5,686.7h2v2h-2zM1034.5,704.6h2v2h-2zM1034.5,722.6h2v2h-2zM1034.5,740.6h2v2h-2zM1034.5,758.5h2v2h-2zM1034.5,776.5h2v2h-2zM1034.5,794.5h2v2h-2zM1034.5,812.5h2v2h-2zM1034.5,830.5h2v2h-2zM1034.5,848.4h2v2h-2zM1034.5,866.4h2v2h-2zM1034.5,884.4h2v2h-2zM1034.5,902.4h2v2h-2zM1034.5,920.3h2v2h-2zM1034.5,938.3h2v2h-2zM1034.5,956.3h2v2h-2zM1034.5,974.2h2v2h-2zM1034.5,992.2h2v2h-2zM1034.5,1010.2h2v2h-2zM1034.5,1028.2h2v2h-2zM1034.5,1046.2h2v2h-2zM1034.5,1064.1h2v2h-2zM1034.5,1082.1h2v2h-2zM1034.5,1100.1h2v2h-2zM1034.5,1118.1h2v2h-2zM1034.5,1136.0h2v2h-2zM1034.5,1154.0h2v2h-2zM1243.5,435.0h2v2h-2zM1243.5,453.0h2v2h-2zM1243.5,470.9h2v2h-2zM1243.5,488.9h2v2h-2zM1243.5,506.9h2v2h-2zM1243.5,524.9h2v2h-2zM1243.5,542.9h2v2h-2zM1243.5,560.8h2v2h-2zM1243.5,578.8h2v2h-2zM1243.5,596.8h2v2h-2zM1243.5,614.8h2v2h-2zM1243.5,632.7h2v2h-2zM1243.5,650.7h2v2h-2zM1243.5,668.7h2v2h-2zM1243.5,686.7h2v2h-2zM1243.5,704.6h2v2h-2zM1243.5,722.6h2v2h-2zM1243.5,740.6h2v2h-2zM1243.5,758.5h2v2h-2zM1243.5,776.5h2v2h-2zM1243.5,794.5h2v2h-2zM1243.5,812.5h2v2h-2zM1243.5,830.5h2v2h-2zM1243.5,848.4h2v2h-2zM1243.5,866.4h2v2h-2zM1243.5,884.4h2v2h-2zM1243.5,902.4h2v2h-2zM1243.5,920.3h2v2h-2zM1243.5,938.3h2v2h-2zM1243.5,956.3h2v2h-2zM1243.5,974.2h2v2h-2zM1243.5,992.2h2v2h-2zM1243.5,1010.2h2v2h-2zM1243.5,1028.2h2v2h-2zM1243.5,1046.2h2v2h-2zM1243.5,1064.1h2v2h-2zM1243.5,1082.1h2v2h-2zM1243.5,1100.1h2v2h-2zM1243.5,1118.1h2v2h-2zM1243.5,1136.0h2v2h-2zM1243.5,1154.0h2v2h-2zM1452.5,435.0h2v2h-2zM1452.5,453.0h2v2h-2zM1452.5,470.9h2v2h-2zM1452.5,488.9h2v2h-2zM1452.5,506.9h2v2h-2zM1452.5,524.9h2v2h-2zM1452.5,542.9h2v2h-2zM1452.5,560.8h2v2h-2zM1452.5,578.8h2v2h-2zM1452.5,596.8h2v2h-2zM1452.5,614.8h2v2h-2zM1452.5,632.7h2v2h-2zM1452.5,650.7h2v2h-2zM1452.5,668.7h2v2h-2zM1452.5,686.7h2v2h-2zM1452.5,704.6h2v2h-2zM1452.5,722.6h2v2h-2zM1452.5,740.6h2v2h-2zM1452.5,758.5h2v2h-2zM1452.5,776.5h2v2h-2zM1452.5,794.5h2v2h-2zM1452.5,812.5h2v2h-2zM1452.5,830.5h2v2h-2zM1452.5,848.4h2v2h-2zM1452.5,866.4h2v2h-2zM1452.5,884.4h2v2h-2zM1452.5,902.4h2v2h-2zM1452.5,920.3h2v2h-2zM1452.5,938.3h2v2h-2zM1452.5,956.3h2v2h-2zM1452.5,974.2h2v2h-2zM1452.5,992.2h2v2h-2zM1452.5,1010.2h2v2h-2zM1452.5,1028.2h2v2h-2zM1452.5,1046.2h2v2h-2zM1452.5,1064.1h2v2h-2zM1452.5,1082.1h2v2h-2zM1452.5,1100.1h2v2h-2zM1452.5,1118.1h2v2h-2zM1452.5,1136.0h2v2h-2zM1452.5,1154.0h2v2h-2zM1661.5,435.0h2v2h-2zM1661.5,453.0h2v2h-2zM1661.5,470.9h2v2h-2zM1661.5,488.9h2v2h-2zM1661.5,506.9h2v2h-2zM1661.5,524.9h2v2h-2zM1661.5,542.9h2v2h-2zM1661.5,560.8h2v2h-2zM1661.5,578.8h2v2h-2zM1661.5,596.8h2v2h-2zM1661.5,614.8h2v2h-2zM1661.5,632.7h2v2h-2zM1661.5,650.7h2v2h-2zM1661.5,668.7h2v2h-2zM1661.5,686.7h2v2h-2zM1661.5,704.6h2v2h-2zM1661.5,722.6h2v2h-2zM1661.5,740.6h2v2h-2zM1661.5,758.5h2v2h-2zM1661.5,776.5h2v2h-2zM1661.5,794.5h2v2h-2zM1661.5,812.5h2v2h-2zM1661.5,830.5h2v2h-2zM1661.5,848.4h2v2h-2zM1661.5,866.4h2v2h-2zM1661.5,884.4h2v2h-2zM1661.5,902.4h2v2h-2zM1661.5,920.3h2v2h-2zM1661.5,938.3h2v2h-2zM1661.5,956.3h2v2h-2zM1661.5,974.2h2v2h-2zM1661.5,992.2h2v2h-2zM1661.5,1010.2h2v2h-2zM1661.5,1028.2h2v2h-2zM1661.5,1046.2h2v2h-2zM1661.5,1064.1h2v2h-2zM1661.5,1082.1h2v2h-2zM1661.5,1100.1h2v2h-2zM1661.5,1118.1h2v2h-2zM1661.5,1136.0h2v2h-2zM1661.5,1154.0h2v2h-2zM1870.5,435.0h2v2h-2zM1870.5,453.0h2v2h-2zM1870.5,470.9h2v2h-2zM1870.5,488.9h2v2h-2zM1870.5,506.9h2v2h-2zM1870.5,524.9h2v2h-2zM1870.5,542.9h2v2h-2zM1870.5,560.8h2v2h-2zM1870.5,578.8h2v2h-2zM1870.5,596.8h2v2h-2zM1870.5,614.8h2v2h-2zM1870.5,632.7h2v2h-2zM1870.5,650.7h2v2h-2zM1870.5,668.7h2v2h-2zM1870.5,686.7h2v2h-2zM1870.5,704.6h2v2h-2zM1870.5,722.6h2v2h-2zM1870.5,740.6h2v2h-2zM1870.5,758.5h2v2h-2zM1870.5,776.5h2v2h-2zM1870.5,794.5h2v2h-2zM1870.5,812.5h2v2h-2zM1870.5,830.5h2v2h-2zM1870.5,848.4h2v2h-2zM1870.5,866.4h2v2h-2zM1870.5,884.4h2v2h-2zM1870.5,902.4h2v2h-2zM1870.5,920.3h2v2h-2zM1870.5,938.3h2v2h-2zM1870.5,956.3h2v2h-2zM1870.5,974.2h2v2h-2zM1870.5,992.2h2v2h-2zM1870.5,1010.2h2v2h-2zM1870.5,1028.2h2v2h-2zM1870.5,1046.2h2v2h-2zM1870.5,1064.1h2v2h-2zM1870.5,1082.1h2v2h-2zM1870.5,1100.1h2v2h-2zM1870.5,1118.1h2v2h-2zM1870.5,1136.0h2v2h-2zM1870.5,1154.0h2v2h-2zM2079.5,435.0h2v2h-2zM2079.5,453.0h2v2h-2zM2079.5,470.9h2v2h-2zM2079.5,488.9h2v2h-2zM2079.5,506.9h2v2h-2zM2079.5,524.9h2v2h-2zM2079.5,542.9h2v2h-2zM2079.5,560.8h2v2h-2zM2079.5,578.8h2v2h-2zM2079.5,596.8h2v2h-2zM2079.5,614.8h2v2h-2zM2079.5,632.7h2v2h-2zM2079.5,650.7h2v2h-2zM2079.5,668.7h2v2h-2zM2079.5,686.7h2v2h-2zM2079.5,704.6h2v2h-2zM2079.5,722.6h2v2h-2zM2079.5,740.6h2v2h-2zM2079.5,758.5h2v2h-2zM2079.5,776.5h2v2h-2zM2079.5,794.5h2v2h-2zM2079.5,812.5h2v2h-2zM2079.5,830.5h2v2h-2zM2079.5,848.4h2v2h-2zM2079.5,866.4h2v2h-2zM2079.5,884.4h2v2h-2zM2079.5,902.4h2v2h-2zM2079.5,920.3h2v2h-2zM2079.5,938.3h2v2h-2zM2079.5,956.3h2v2h-2zM2079.5,974.2h2v2h-2zM2079.5,992.2h2v2h-2zM2079.5,1010.2h2v2h-2zM2079.5,1028.2h2v2h-2zM2079.5,1046.2h2v2h-2zM2079.5,1064.1h2v2h-2zM2079.5,1082.1h2v2h-2zM2079.5,1100.1h2v2h-2zM2079.5,1118.1h2v2h-2zM2079.5,1136.0h2v2h-2zM2079.5,1154.0h2v2h-2z" fill="#cfcfcf"/></svg>
<svg style="position:absolute;left:0;top:0;overflow:hidden" width="2362" height="1246"><defs><clipPath id="pc"><rect x="199" y="436" width="2091" height="718"/></clipPath></defs><g clip-path="url(#pc)"><path d="M199.5,614 L239,614 L239,477 M239,477 L302,477 L302,471 L302,484 L330,484 L330,477 M330,477 L388,477 L388,471 L388,484 L428,484 L428,477 M428,477 L474.5,477 L476.5,478.2 L478.5,477 L529.8,477 L531.8,478.2 L533.8,477 L533.8,477 L535.8,478.2 L537.8,477 L962.9,477 L964.9,478.2 L966.9,477 L966.9,477 L968.9,478.2 L970.9,477 L1248.4,477 L1250.4,478.2 L1252.4,477 L1252.4,477 L1254.4,478.2 L1256.4,477 L1256.4,477 L1258.4,478.2 L1260.4,477 L1577,477 L1577,471 L1577,484 L1606,484 L1606,477 M1606,477 L1664,477 L1664,471 L1664,484 L1703,484 L1703,477 M1703,477 L1788.3,477 L1790.3,478.2 L1792.3,477 L1836.6,477 L1838.6,478.2 L1840.6,477 L1840.6,477 L1842.6,478.2 L1844.6,477 L1844.6,477 L1846.6,478.2 L1848.6,477 L2030.5,477 L2032.5,478.2 L2034.5,477 L2034.5,477 L2036.5,478.2 L2038.5,477 L2099.2,477 L2101.2,478.2 L2103.2,477 L2110.7,477 L2112.7,478.2 L2114.7,477 L2114.7,477 L2116.7,478.2 L2118.7,477 L2184.8,477 L2186.8,478.2 L2188.8,477 L2188.8,477 L2190.8,478.2 L2192.8,477 L2289.5,477" stroke="#00ff00" stroke-width="2" fill="none"/><path d="M302.5,485.2V615.7M303.5,484.8V619.8M304.5,483.6V616.6M305.5,485.0V623.7M306.5,484.3V613.4M307.5,485.9V615.8M308.5,485.4V629.2M309.5,485.1V614.2M310.5,485.3V616.3M311.5,485.7V613.2M312.5,484.3V616.2M313.5,483.2V611.9M314.5,484.9V617.1M315.5,485.2V621.5M316.5,484.9V626.2M317.5,483.8V612.9M319.5,486.0V614.3M322.5,485.8V615.9M323.5,483.2V630.1M324.5,485.1V616.1M325.5,485.0V621.8M326.5,485.1V613.7M327.5,485.2V612.3M328.5,484.7V612.1M329.5,484.3V619.5M330.5,484.2V613.7M388.5,484.1V625.6M389.5,483.6V614.6M390.5,485.5V618.2M391.5,485.6V612.6M392.5,484.6V611.2M393.5,485.4V619.7M394.5,483.3V615.9M395.5,483.3V617.6M396.5,484.9V612.3M397.5,484.6V613.0M398.5,485.9V614.5M399.5,485.2V615.4M400.5,485.5V619.2M401.5,485.5V618.7M402.5,484.6V619.6M403.5,484.3V618.2M404.5,484.1V617.7M405.5,483.9V612.8M406.5,483.3V611.5M407.5,484.4V619.1M408.5,483.6V621.1M409.5,484.8V613.1M410.5,483.5V612.7M411.5,485.5V613.8M413.5,485.7V613.3M415.5,484.4V615.9M416.5,485.4V611.4M417.5,483.8V615.7M418.5,484.4V617.1M419.5,484.8V618.2M420.5,483.8V612.4M421.5,486.0V615.6M422.5,483.0V629.7M423.5,483.2V618.6M424.5,484.4V626.1M425.5,483.9V616.3M426.5,483.3V614.8M427.5,484.6V612.9M428.5,483.9V618.5M1577.5,485.1V613.8M1578.5,484.4V624.3M1579.5,483.0V618.5M1580.5,484.4V599.7M1581.5,483.9V629.3M1582.5,484.0V615.9M1583.5,483.6V617.0M1584.5,484.7V614.0M1585.5,483.3V614.0M1586.5,485.1V611.8M1587.5,484.8V614.6M1588.5,484.2V615.3M1589.5,484.5V619.3M1591.5,484.2V617.9M1594.5,485.1V621.9M1595.5,484.8V573.2M1596.5,483.3V614.1M1597.5,485.5V615.6M1598.5,485.7V612.4M1599.5,483.4V614.2M1600.5,485.1V619.9M1601.5,484.9V612.8M1602.5,485.1V622.1M1603.5,484.4V619.4M1604.5,484.6V636.0M1605.5,485.7V616.0M1606.5,483.4V618.4M1664.5,483.7V613.6M1665.5,483.2V567.2M1666.5,485.0V619.9M1667.5,484.1V617.0M1668.5,484.4V621.8M1669.5,483.5V614.5M1670.5,484.0V613.4M1671.5,483.4V611.3M1672.5,484.2V616.4M1673.5,485.3V617.2M1674.5,485.6V620.0M1675.5,485.7V614.9M1677.5,485.7V615.7M1680.5,485.7V611.5M1681.5,483.9V616.4M1682.5,484.5V619.7M1683.5,484.6V611.5M1684.5,483.7V613.8M1685.5,485.0V619.2M1686.5,483.7V614.8M1687.5,483.3V616.1M1688.5,485.9V569.8M1690.5,483.2V613.7M1692.5,484.1V618.3M1693.5,483.9V627.6M1694.5,484.4V619.4M1695.5,485.7V613.7M1696.5,484.4V618.5M1697.5,483.6V618.9M1698.5,483.2V612.7M1699.5,485.7V617.5M1700.5,485.8V629.9M1701.5,485.1V617.2M1702.5,485.4V624.6M1703.5,484.8V617.0" stroke="#00ff00" stroke-width="1.4" fill="none"/><path d="M199.5,973 L199.5,973 L201.5,974.2 L203.5,973 L211.2,973 L213.2,974.2 L215.2,973 L215.2,973 L217.2,974.2 L219.2,973 L219.2,973 L221.2,974.2 L223.2,973 L239,973 L239,835 M239,835 L302,835 L302,835 M332,835 M332,835 L332.0,835 L334.0,836.2 L336.0,835 L336.0,835 L338.0,836.2 L340.0,835 L343.4,835 L345.4,836.2 L347.4,835 L347.4,835 L349.4,836.2 L351.4,835 L351.4,835 L353.4,836.2 L355.4,835 L371.2,835 L373.2,836.2 L375.2,835 L375.2,835 L377.2,836.2 L379.2,835 L389,835 L389,835 M429,835 M429,835 L492.4,835 L494.4,836.2 L496.4,835 L496.4,835 L498.4,836.2 L500.4,835 L500.4,835 L502.4,836.2 L504.4,835 L514.2,835 L516.2,836.2 L518.2,835 L518.2,835 L520.2,836.2 L522.2,835 L535.4,835 L537.4,836.2 L539.4,835 L539.4,835 L541.4,836.2 L543.4,835 L582.0,835 L584.0,836.2 L586.0,835 L586.0,835 L588.0,836.2 L590.0,835 L645.0,835 L647.0,836.2 L649.0,835 L649.0,835 L651.0,836.2 L653.0,835 L681.6,835 L683.6,836.2 L685.6,835 L685.6,835 L687.6,836.2 L689.6,835 L689.6,835 L691.6,836.2 L693.6,835 L702.2,835 L704.2,836.2 L706.2,835 L706.2,835 L708.2,836.2 L710.2,835 L710.2,835 L712.2,836.2 L714.2,835 L766.5,835 L768.5,836.2 L770.5,835 L770.5,835 L772.5,836.2 L774.5,835 L810.1,835 L812.1,836.2 L814.1,835 L814.1,835 L816.1,836.2 L818.1,835 L917.3,835 L919.3,836.2 L921.3,835 L921.3,835 L923.3,836.2 L925.3,835 L937.2,835 L939.2,836.2 L941.2,835 L941.2,835 L943.2,836.2 L945.2,835 L1170.1,835 L1172.1,836.2 L1174.1,835 L1281.9,835 L1283.9,836.2 L1285.9,835 L1285.9,835 L1287.9,836.2 L1289.9,835 L1289.9,835 L1291.9,836.2 L1293.9,835 L1303.7,835 L1305.7,836.2 L1307.7,835 L1307.7,835 L1309.7,836.2 L1311.7,835 L1311.7,835 L1313.7,836.2 L1315.7,835 L1418.3,835 L1420.3,836.2 L1422.3,835 L1448.2,835 L1450.2,836.2 L1452.2,835 L1452.2,835 L1454.2,836.2 L1456.2,835 L1456.2,835 L1458.2,836.2 L1460.2,835 L1577,835 L1577,835 M1607,835 M1607,835 L1616.9,835 L1618.9,836.2 L1620.9,835 L1620.9,835 L1622.9,836.2 L1624.9,835 L1624.9,835 L1626.9,836.2 L1628.9,835 L1663,835 L1663,835 M1703,835 M1703,835 L1716.0,835 L1718.0,836.2 L1720.0,835 L1720.0,835 L1722.0,836.2 L1724.0,835 L1775.5,835 L1777.5,836.2 L1779.5,835 L1779.5,835 L1781.5,836.2 L1783.5,835 L1811.8,835 L1813.8,836.2 L1815.8,835 L1824.7,835 L1826.7,836.2 L1828.7,835 L1828.7,835 L1830.7,836.2 L1832.7,835 L1840.4,835 L1842.4,836.2 L1844.4,835 L1844.4,835 L1846.4,836.2 L1848.4,835 L1920.4,835 L1922.4,836.2 L1924.4,835 L1924.4,835 L1926.4,836.2 L1928.4,835 L1944.2,835 L1946.2,836.2 L1948.2,835 L1948.2,835 L1950.2,836.2 L1952.2,835 L2043.1,835 L2045.1,836.2 L2047.1,835 L2047.1,835 L2049.1,836.2 L2051.1,835 L2058.9,835 L2060.9,836.2 L2062.9,835 L2062.9,835 L2064.9,836.2 L2066.9,835 L2236.8,835 L2238.8,836.2 L2240.8,835 L2240.8,835 L2242.8,836.2 L2244.8,835 L2244.8,835 L2246.8,836.2 L2248.8,835 L2258.3,835 L2260.3,836.2 L2262.3,835 L2262.3,835 L2264.3,836.2 L2266.3,835 L2289.5,835" stroke="#00ffff" stroke-width="2" fill="none"/><path d="M303.5,830.2V984.2M304.5,830.5V979.9M305.5,831.8V984.9M307.5,832.0V956.6M308.5,831.4V984.0M310.5,829.6V982.8M313.5,831.4V991.3M314.5,831.6V980.7M315.5,831.4V982.8M316.5,830.0V982.1M317.5,830.2V987.4M318.5,829.2V983.3M320.5,831.6V980.4M321.5,830.3V922.1M323.5,829.8V981.2M324.5,831.1V985.7M325.5,830.8V993.1M327.5,831.1V980.4M328.5,830.2V981.5M329.5,831.5V983.4M330.5,831.8V982.2M331.5,829.9V992.0M332.5,831.0V981.0M389.5,831.2V985.5M390.5,829.8V988.0M391.5,831.1V985.7M392.5,829.4V980.7M394.5,830.0V980.8M395.5,830.6V958.3M396.5,830.1V979.6M397.5,831.7V983.7M399.5,830.4V979.2M404.5,831.0V982.3M405.5,832.0V985.8M406.5,831.1V984.8M408.5,830.2V979.5M409.5,829.6V980.5M410.5,831.2V910.8M413.5,831.2V983.5M414.5,831.3V930.5M415.5,831.8V979.1M416.5,830.6V979.2M417.5,829.9V979.8M419.5,829.4V933.3M420.5,829.7V981.1M421.5,830.7V985.7M423.5,829.5V996.9M424.5,830.8V982.7M425.5,829.0V985.7M427.5,831.1V984.7M428.5,829.9V984.3M429.5,829.1V983.5M1577.5,829.3V979.5M1578.5,831.0V981.3M1579.5,830.5V985.6M1580.5,831.2V981.8M1582.5,830.4V981.6M1583.5,829.1V982.0M1584.5,830.6V979.4M1585.5,829.9V985.8M1588.5,830.5V926.4M1589.5,831.9V994.1M1591.5,829.9V983.2M1592.5,830.5V983.1M1593.5,829.8V985.6M1594.5,831.6V984.6M1595.5,829.3V981.0M1601.5,830.0V984.8M1602.5,829.2V984.5M1603.5,830.7V979.3M1605.5,831.3V996.6M1606.5,830.3V979.0M1663.5,829.2V985.9M1664.5,830.1V982.1M1665.5,831.2V907.5M1666.5,830.6V907.7M1668.5,830.7V981.2M1669.5,830.6V980.5M1670.5,830.4V928.1M1671.5,831.8V981.6M1673.5,831.3V948.3M1674.5,829.6V980.2M1677.5,830.8V980.1M1678.5,831.5V981.7M1679.5,831.9V983.1M1680.5,831.2V987.5M1681.5,830.1V992.3M1684.5,830.7V982.0M1685.5,830.5V985.4M1686.5,831.5V945.4M1687.5,830.0V983.0M1689.5,831.4V951.0M1690.5,830.8V988.0M1691.5,831.7V984.4M1692.5,831.9V983.8M1693.5,831.2V981.0M1696.5,829.8V988.3M1697.5,829.8V987.6M1698.5,831.6V980.9M1699.5,830.8V985.0M1701.5,831.0V984.1M1702.5,829.2V984.4M1703.5,829.7V981.5" stroke="#00ffff" stroke-width="1.4" fill="none"/></g></svg>
<div style="position:absolute;left:877px;top:429px;width:527px;height:301px;border-radius:9px;border:1px solid #9a9a9a;box-sizing:border-box;overflow:hidden;background:linear-gradient(#c4d0dc 0px,#8a96a2 4px,#3c4448 18px,#141818 34px,#0f1a12 44px,#0e140e 47px,#0c0c0c 60px,#0c0c0c 100%)"></div>
<div style="position:absolute;left:879px;top:435px;width:210px;height:42px;background:linear-gradient(90deg,rgba(150,156,160,0.95) 0px,rgba(160,166,170,0.95) 150px,rgba(150,156,160,0) 205px);-webkit-mask-image:linear-gradient(rgba(0,0,0,0.4),#000 30%,#000 70%,rgba(0,0,0,0.2))"></div>
<div style="position:absolute;left:879px;top:430px;width:523px;height:2px;background:rgba(220,230,240,0.7);border-radius:8px 8px 0 0"></div>
<svg style="position:absolute;left:889px;top:440px;" width="28" height="27" viewBox="0 0 28 27"><rect x="0" y="2" width="27" height="23" fill="#a8a232"/><rect x="2" y="0" width="22" height="2" fill="#2a8a3a"/><rect x="2" y="25" width="22" height="2" fill="#2a8a3a"/><path d="M8,5 L7,12 M6.7,14 L5.7,21 M10.5,4.5 L15.5,4.5 M16.2,5 L15.2,12 M10,13 L14.8,13 M9.5,14 L8.5,21 M8.8,21.8 L13.8,21.8 M18.5,4.5 L23.5,4.5 M24.2,5 L23.2,12 M18,13 L22.8,13 M22.9,14 L21.9,21 M16.8,21.8 L21.8,21.8" stroke="#111" stroke-width="1.8"/></svg>
<div class="t" style="left:926px;top:442.22px;font-size:21px;color:#140a08;letter-spacing:-0.37px;">измеритель1</div>
<svg style="position:absolute;left:1216px;top:429px;" width="182" height="36" viewBox="0 0 182 36"><defs><linearGradient id="tbg" x1="0" y1="0" x2="0" y2="1"><stop offset="0" stop-color="#8c949c"/><stop offset="0.35" stop-color="#454b52"/><stop offset="1" stop-color="#151a1c"/></linearGradient></defs><path d="M1,0 L1,26 Q1,34 9,34 L173,34 Q181,34 181,26 L181,0" fill="url(#tbg)" stroke="#b4b8bc" stroke-width="1.2"/><path d="M4,0 L4,24 Q4,31 11,31 L49,31 L49,0" fill="none" stroke="#8a9096" stroke-width="1"/><rect x="52" y="1" width="43" height="30" fill="none" stroke="#8a9096" stroke-width="1"/><path d="M98,0 L98,31 L171,31 Q178,31 178,24 L178,0" fill="none" stroke="#8a9096" stroke-width="1"/><rect x="20" y="16" width="18" height="6" fill="#fff" stroke="#333" stroke-width="0.8"/><rect x="66" y="10" width="16" height="12" fill="none" stroke="#fff" stroke-width="3"/><path d="M131,11 L145,23 M145,11 L131,23" stroke="#fff" stroke-width="4"/></svg>
<div style="position:absolute;left:885px;top:477px;width:512px;height:244px;background:#000;border:1px solid #c0c4c0;box-sizing:border-box;border-radius:2px"></div>
<div style="position:absolute;left:892px;top:483px;width:246px;height:42px;background:#fff;border-radius:8px"></div>
<div style="position:absolute;left:1144px;top:483px;width:247px;height:42px;background:#fff;border-radius:8px"></div>
<svg style="position:absolute;left:899px;top:492px;" width="24" height="24" viewBox="0 0 24 24"><circle cx="12" cy="12" r="11.5" fill="#999"/><circle cx="12" cy="12" r="9" fill="#c8c8c8"/><circle cx="12" cy="12" r="7.5" fill="#1ee61e"/><circle cx="12" cy="12" r="3.3" fill="#ee0"/><rect x="11" y="11" width="2" height="2" fill="#444"/></svg>
<div class="t" style="left:934px;top:495.22px;font-size:21px;color:#100818;letter-spacing:-0.04px;">Кан1</div>
<svg style="position:absolute;left:1152px;top:492px;" width="24" height="24" viewBox="0 0 24 24"><circle cx="12" cy="12" r="11.5" fill="#999"/><circle cx="12" cy="12" r="9" fill="#c8c8c8"/><circle cx="12" cy="12" r="7.5" fill="#19e6e6"/><circle cx="12" cy="12" r="3.3" fill="#ee0"/><rect x="11" y="11" width="2" height="2" fill="#444"/></svg>
<div class="t" style="left:1187px;top:495.22px;font-size:21px;color:#100818;letter-spacing:-0.04px;">Кан2</div>
<div style="position:absolute;left:892px;top:532px;width:246px;height:88px;border:2px solid #00ff00;border-radius:8px;box-sizing:border-box"></div>
<div class="t" style="left:899px;top:542.82px;font-size:21px;color:#00ff00;letter-spacing:-0.31px;font-weight:bold;">СКЗ</div>
<svg style="position:absolute;left:0;top:0" width="2362" height="1246"><g fill="#00ff00"><polygon points="933.4,568.0 954.4,568.0 948.9,573.5 938.9,573.5"/><polygon points="954.4,568.0 954.4,588.0 948.9,585.2 948.9,573.5"/><polygon points="933.4,588.0 938.9,585.2 948.9,585.2 954.4,588.0 948.9,590.8 938.9,590.8"/><polygon points="954.4,588.0 954.4,608.0 948.9,602.5 948.9,590.8"/><polygon points="938.9,602.5 948.9,602.5 954.4,608.0 933.4,608.0"/><path d="M933.4,568.0L938.9,573.5M954.4,568.0L948.9,573.5M933.4,608.0L938.9,602.5M954.4,608.0L948.9,602.5M933.4,588.0L938.9,585.2M933.4,588.0L938.9,590.8M954.4,588.0L948.9,585.2M954.4,588.0L948.9,590.8" stroke="#000" stroke-width="1.1" fill="none"/><polygon points="964.3,568.0 985.3,568.0 979.8,573.5 969.8,573.5"/><polygon points="985.3,568.0 985.3,588.0 979.8,585.2 979.8,573.5"/><polygon points="985.3,588.0 985.3,608.0 979.8,602.5 979.8,590.8"/><polygon points="969.8,602.5 979.8,602.5 985.3,608.0 964.3,608.0"/><polygon points="964.3,588.0 969.8,590.8 969.8,602.5 964.3,608.0"/><polygon points="964.3,568.0 969.8,573.5 969.8,585.2 964.3,588.0"/><path d="M964.3,568.0L969.8,573.5M985.3,568.0L979.8,573.5M964.3,608.0L969.8,602.5M985.3,608.0L979.8,602.5M964.3,588.0L969.8,585.2M964.3,588.0L969.8,590.8M985.3,588.0L979.8,585.2M985.3,588.0L979.8,590.8" stroke="#000" stroke-width="1.1" fill="none"/><polygon points="1018.0,568.0 1018.0,588.0 1012.5,585.2 1012.5,573.5"/><polygon points="1018.0,588.0 1018.0,608.0 1012.5,602.5 1012.5,590.8"/><path d="M997.0,568.0L1002.5,573.5M1018.0,568.0L1012.5,573.5M997.0,608.0L1002.5,602.5M1018.0,608.0L1012.5,602.5M997.0,588.0L1002.5,585.2M997.0,588.0L1002.5,590.8M1018.0,588.0L1012.5,585.2M1018.0,588.0L1012.5,590.8" stroke="#000" stroke-width="1.1" fill="none"/><polygon points="1029.7,568.0 1050.7,568.0 1045.2,573.5 1035.2,573.5"/><polygon points="1029.7,568.0 1035.2,573.5 1035.2,585.2 1029.7,588.0"/><polygon points="1029.7,588.0 1035.2,585.2 1045.2,585.2 1050.7,588.0 1045.2,590.8 1035.2,590.8"/><polygon points="1029.7,588.0 1035.2,590.8 1035.2,602.5 1029.7,608.0"/><polygon points="1035.2,602.5 1045.2,602.5 1050.7,608.0 1029.7,608.0"/><polygon points="1050.7,588.0 1050.7,608.0 1045.2,602.5 1045.2,590.8"/><path d="M1029.7,568.0L1035.2,573.5M1050.7,568.0L1045.2,573.5M1029.7,608.0L1035.2,602.5M1050.7,608.0L1045.2,602.5M1029.7,588.0L1035.2,585.2M1029.7,588.0L1035.2,590.8M1050.7,588.0L1045.2,585.2M1050.7,588.0L1045.2,590.8" stroke="#000" stroke-width="1.1" fill="none"/><polygon points="1063.3,568.0 1068.8,573.5 1068.8,585.2 1063.3,588.0"/><polygon points="1063.3,588.0 1068.8,585.2 1078.8,585.2 1084.3,588.0 1078.8,590.8 1068.8,590.8"/><polygon points="1084.3,568.0 1084.3,588.0 1078.8,585.2 1078.8,573.5"/><polygon points="1084.3,588.0 1084.3,608.0 1078.8,602.5 1078.8,590.8"/><path d="M1063.3,568.0L1068.8,573.5M1084.3,568.0L1078.8,573.5M1063.3,608.0L1068.8,602.5M1084.3,608.0L1078.8,602.5M1063.3,588.0L1068.8,585.2M1063.3,588.0L1068.8,590.8M1084.3,588.0L1078.8,585.2M1084.3,588.0L1078.8,590.8" stroke="#000" stroke-width="1.1" fill="none"/><rect x="955.5" y="602" width="7" height="6" rx="2"/></g></svg>
<div class="t" style="left:1096px;top:585.92px;font-size:19px;color:#00ff00;letter-spacing:-1.22px;font-weight:bold;">В</div>
<div style="position:absolute;left:892px;top:627px;width:246px;height:88px;border:2px solid #00ff00;border-radius:8px;box-sizing:border-box"></div>
<div class="t" style="left:899px;top:636.55px;font-size:22.5px;color:#00ff00;letter-spacing:0.51px;font-weight:bold;">Среднее</div>
<svg style="position:absolute;left:0;top:0" width="2362" height="1246"><g fill="#00ff00"><polygon points="931.6,663.0 952.6,663.0 947.1,668.5 937.1,668.5"/><polygon points="952.6,663.0 952.6,683.0 947.1,680.2 947.1,668.5"/><polygon points="931.6,683.0 937.1,680.2 947.1,680.2 952.6,683.0 947.1,685.8 937.1,685.8"/><polygon points="931.6,683.0 937.1,685.8 937.1,697.5 931.6,703.0"/><polygon points="937.1,697.5 947.1,697.5 952.6,703.0 931.6,703.0"/><path d="M931.6,663.0L937.1,668.5M952.6,663.0L947.1,668.5M931.6,703.0L937.1,697.5M952.6,703.0L947.1,697.5M931.6,683.0L937.1,680.2M931.6,683.0L937.1,685.8M952.6,683.0L947.1,680.2M952.6,683.0L947.1,685.8" stroke="#000" stroke-width="1.1" fill="none"/><polygon points="966.0,663.0 987.0,663.0 981.5,668.5 971.5,668.5"/><polygon points="987.0,663.0 987.0,683.0 981.5,680.2 981.5,668.5"/><polygon points="987.0,683.0 987.0,703.0 981.5,697.5 981.5,685.8"/><polygon points="971.5,697.5 981.5,697.5 987.0,703.0 966.0,703.0"/><polygon points="966.0,663.0 971.5,668.5 971.5,680.2 966.0,683.0"/><polygon points="966.0,683.0 971.5,680.2 981.5,680.2 987.0,683.0 981.5,685.8 971.5,685.8"/><path d="M966.0,663.0L971.5,668.5M987.0,663.0L981.5,668.5M966.0,703.0L971.5,697.5M987.0,703.0L981.5,697.5M966.0,683.0L971.5,680.2M966.0,683.0L971.5,685.8M987.0,683.0L981.5,680.2M987.0,683.0L981.5,685.8" stroke="#000" stroke-width="1.1" fill="none"/><polygon points="998.6,663.0 1019.6,663.0 1014.1,668.5 1004.1,668.5"/><polygon points="998.6,663.0 1004.1,668.5 1004.1,680.2 998.6,683.0"/><polygon points="998.6,683.0 1004.1,680.2 1014.1,680.2 1019.6,683.0 1014.1,685.8 1004.1,685.8"/><polygon points="1019.6,683.0 1019.6,703.0 1014.1,697.5 1014.1,685.8"/><polygon points="1004.1,697.5 1014.1,697.5 1019.6,703.0 998.6,703.0"/><path d="M998.6,663.0L1004.1,668.5M1019.6,663.0L1014.1,668.5M998.6,703.0L1004.1,697.5M1019.6,703.0L1014.1,697.5M998.6,683.0L1004.1,680.2M998.6,683.0L1004.1,685.8M1019.6,683.0L1014.1,680.2M1019.6,683.0L1014.1,685.8" stroke="#000" stroke-width="1.1" fill="none"/><polygon points="1031.0,663.0 1052.0,663.0 1046.5,668.5 1036.5,668.5"/><polygon points="1052.0,663.0 1052.0,683.0 1046.5,680.2 1046.5,668.5"/><polygon points="1052.0,683.0 1052.0,703.0 1046.5,697.5 1046.5,685.8"/><polygon points="1036.5,697.5 1046.5,697.5 1052.0,703.0 1031.0,703.0"/><polygon points="1031.0,663.0 1036.5,668.5 1036.5,680.2 1031.0,683.0"/><polygon points="1031.0,683.0 1036.5,680.2 1046.5,680.2 1052.0,683.0 1046.5,685.8 1036.5,685.8"/><path d="M1031.0,663.0L1036.5,668.5M1052.0,663.0L1046.5,668.5M1031.0,703.0L1036.5,697.5M1052.0,703.0L1046.5,697.5M1031.0,683.0L1036.5,680.2M1031.0,683.0L1036.5,685.8M1052.0,683.0L1046.5,680.2M1052.0,683.0L1046.5,685.8" stroke="#000" stroke-width="1.1" fill="none"/><polygon points="1063.5,663.0 1084.5,663.0 1079.0,668.5 1069.0,668.5"/><polygon points="1084.5,663.0 1084.5,683.0 1079.0,680.2 1079.0,668.5"/><polygon points="1084.5,683.0 1084.5,703.0 1079.0,697.5 1079.0,685.8"/><polygon points="1069.0,697.5 1079.0,697.5 1084.5,703.0 1063.5,703.0"/><polygon points="1063.5,683.0 1069.0,685.8 1069.0,697.5 1063.5,703.0"/><polygon points="1063.5,663.0 1069.0,668.5 1069.0,680.2 1063.5,683.0"/><polygon points="1063.5,683.0 1069.0,680.2 1079.0,680.2 1084.5,683.0 1079.0,685.8 1069.0,685.8"/><path d="M1063.5,663.0L1069.0,668.5M1084.5,663.0L1079.0,668.5M1063.5,703.0L1069.0,697.5M1084.5,703.0L1079.0,697.5M1063.5,683.0L1069.0,680.2M1063.5,683.0L1069.0,685.8M1084.5,683.0L1079.0,680.2M1084.5,683.0L1079.0,685.8" stroke="#000" stroke-width="1.1" fill="none"/><rect x="955.5" y="697" width="7" height="6" rx="2"/></g></svg>
<div class="t" style="left:1096px;top:680.92px;font-size:19px;color:#00ff00;letter-spacing:-1.22px;font-weight:bold;">В</div>
<div style="position:absolute;left:1144px;top:532px;width:246px;height:88px;border:2px solid #00ffff;border-radius:8px;box-sizing:border-box"></div>
<div class="t" style="left:1151px;top:542.82px;font-size:21px;color:#00ffff;letter-spacing:-0.31px;font-weight:bold;">СКЗ</div>
<svg style="position:absolute;left:0;top:0" width="2362" height="1246"><g fill="#00ffff"><polygon points="1185.4,568.0 1206.4,568.0 1200.9,573.5 1190.9,573.5"/><polygon points="1206.4,568.0 1206.4,588.0 1200.9,585.2 1200.9,573.5"/><polygon points="1185.4,588.0 1190.9,585.2 1200.9,585.2 1206.4,588.0 1200.9,590.8 1190.9,590.8"/><polygon points="1206.4,588.0 1206.4,608.0 1200.9,602.5 1200.9,590.8"/><polygon points="1190.9,602.5 1200.9,602.5 1206.4,608.0 1185.4,608.0"/><path d="M1185.4,568.0L1190.9,573.5M1206.4,568.0L1200.9,573.5M1185.4,608.0L1190.9,602.5M1206.4,608.0L1200.9,602.5M1185.4,588.0L1190.9,585.2M1185.4,588.0L1190.9,590.8M1206.4,588.0L1200.9,585.2M1206.4,588.0L1200.9,590.8" stroke="#000" stroke-width="1.1" fill="none"/><polygon points="1216.3,568.0 1237.3,568.0 1231.8,573.5 1221.8,573.5"/><polygon points="1237.3,568.0 1237.3,588.0 1231.8,585.2 1231.8,573.5"/><polygon points="1237.3,588.0 1237.3,608.0 1231.8,602.5 1231.8,590.8"/><polygon points="1221.8,602.5 1231.8,602.5 1237.3,608.0 1216.3,608.0"/><polygon points="1216.3,588.0 1221.8,590.8 1221.8,602.5 1216.3,608.0"/><polygon points="1216.3,568.0 1221.8,573.5 1221.8,585.2 1216.3,588.0"/><path d="M1216.3,568.0L1221.8,573.5M1237.3,568.0L1231.8,573.5M1216.3,608.0L1221.8,602.5M1237.3,608.0L1231.8,602.5M1216.3,588.0L1221.8,585.2M1216.3,588.0L1221.8,590.8M1237.3,588.0L1231.8,585.2M1237.3,588.0L1231.8,590.8" stroke="#000" stroke-width="1.1" fill="none"/><polygon points="1249.0,568.0 1270.0,568.0 1264.5,573.5 1254.5,573.5"/><polygon points="1270.0,568.0 1270.0,588.0 1264.5,585.2 1264.5,573.5"/><polygon points="1249.0,588.0 1254.5,585.2 1264.5,585.2 1270.0,588.0 1264.5,590.8 1254.5,590.8"/><polygon points="1249.0,588.0 1254.5,590.8 1254.5,602.5 1249.0,608.0"/><polygon points="1254.5,602.5 1264.5,602.5 1270.0,608.0 1249.0,608.0"/><path d="M1249.0,568.0L1254.5,573.5M1270.0,568.0L1264.5,573.5M1249.0,608.0L1254.5,602.5M1270.0,608.0L1264.5,602.5M1249.0,588.0L1254.5,585.2M1249.0,588.0L1254.5,590.8M1270.0,588.0L1264.5,585.2M1270.0,588.0L1264.5,590.8" stroke="#000" stroke-width="1.1" fill="none"/><polygon points="1281.7,568.0 1287.2,573.5 1287.2,585.2 1281.7,588.0"/><polygon points="1281.7,588.0 1287.2,585.2 1297.2,585.2 1302.7,588.0 1297.2,590.8 1287.2,590.8"/><polygon points="1302.7,568.0 1302.7,588.0 1297.2,585.2 1297.2,573.5"/><polygon points="1302.7,588.0 1302.7,608.0 1297.2,602.5 1297.2,590.8"/><path d="M1281.7,568.0L1287.2,573.5M1302.7,568.0L1297.2,573.5M1281.7,608.0L1287.2,602.5M1302.7,608.0L1297.2,602.5M1281.7,588.0L1287.2,585.2M1281.7,588.0L1287.2,590.8M1302.7,588.0L1297.2,585.2M1302.7,588.0L1297.2,590.8" stroke="#000" stroke-width="1.1" fill="none"/><polygon points="1315.3,568.0 1336.3,568.0 1330.8,573.5 1320.8,573.5"/><polygon points="1336.3,568.0 1336.3,588.0 1330.8,585.2 1330.8,573.5"/><polygon points="1336.3,588.0 1336.3,608.0 1330.8,602.5 1330.8,590.8"/><polygon points="1320.8,602.5 1330.8,602.5 1336.3,608.0 1315.3,608.0"/><polygon points="1315.3,588.0 1320.8,590.8 1320.8,602.5 1315.3,608.0"/><polygon points="1315.3,568.0 1320.8,573.5 1320.8,585.2 1315.3,588.0"/><path d="M1315.3,568.0L1320.8,573.5M1336.3,568.0L1330.8,573.5M1315.3,608.0L1320.8,602.5M1336.3,608.0L1330.8,602.5M1315.3,588.0L1320.8,585.2M1315.3,588.0L1320.8,590.8M1336.3,588.0L1330.8,585.2M1336.3,588.0L1330.8,590.8" stroke="#000" stroke-width="1.1" fill="none"/><rect x="1207.5" y="602" width="7" height="6" rx="2"/></g></svg>
<div class="t" style="left:1348px;top:585.92px;font-size:19px;color:#00ffff;letter-spacing:-1.22px;font-weight:bold;">В</div>
<div style="position:absolute;left:1144px;top:627px;width:246px;height:88px;border:2px solid #00ffff;border-radius:8px;box-sizing:border-box"></div>
<div class="t" style="left:1151px;top:636.55px;font-size:22.5px;color:#00ffff;letter-spacing:0.51px;font-weight:bold;">Среднее</div>
<svg style="position:absolute;left:0;top:0" width="2362" height="1246"><g fill="#00ffff"><polygon points="1183.6,663.0 1204.6,663.0 1199.1,668.5 1189.1,668.5"/><polygon points="1204.6,663.0 1204.6,683.0 1199.1,680.2 1199.1,668.5"/><polygon points="1183.6,683.0 1189.1,680.2 1199.1,680.2 1204.6,683.0 1199.1,685.8 1189.1,685.8"/><polygon points="1183.6,683.0 1189.1,685.8 1189.1,697.5 1183.6,703.0"/><polygon points="1189.1,697.5 1199.1,697.5 1204.6,703.0 1183.6,703.0"/><path d="M1183.6,663.0L1189.1,668.5M1204.6,663.0L1199.1,668.5M1183.6,703.0L1189.1,697.5M1204.6,703.0L1199.1,697.5M1183.6,683.0L1189.1,680.2M1183.6,683.0L1189.1,685.8M1204.6,683.0L1199.1,680.2M1204.6,683.0L1199.1,685.8" stroke="#000" stroke-width="1.1" fill="none"/><polygon points="1218.0,663.0 1239.0,663.0 1233.5,668.5 1223.5,668.5"/><polygon points="1239.0,663.0 1239.0,683.0 1233.5,680.2 1233.5,668.5"/><polygon points="1239.0,683.0 1239.0,703.0 1233.5,697.5 1233.5,685.8"/><polygon points="1223.5,697.5 1233.5,697.5 1239.0,703.0 1218.0,703.0"/><polygon points="1218.0,663.0 1223.5,668.5 1223.5,680.2 1218.0,683.0"/><polygon points="1218.0,683.0 1223.5,680.2 1233.5,680.2 1239.0,683.0 1233.5,685.8 1223.5,685.8"/><path d="M1218.0,663.0L1223.5,668.5M1239.0,663.0L1233.5,668.5M1218.0,703.0L1223.5,697.5M1239.0,703.0L1233.5,697.5M1218.0,683.0L1223.5,680.2M1218.0,683.0L1223.5,685.8M1239.0,683.0L1233.5,680.2M1239.0,683.0L1233.5,685.8" stroke="#000" stroke-width="1.1" fill="none"/><polygon points="1250.6,663.0 1271.6,663.0 1266.1,668.5 1256.1,668.5"/><polygon points="1250.6,663.0 1256.1,668.5 1256.1,680.2 1250.6,683.0"/><polygon points="1250.6,683.0 1256.1,680.2 1266.1,680.2 1271.6,683.0 1266.1,685.8 1256.1,685.8"/><polygon points="1250.6,683.0 1256.1,685.8 1256.1,697.5 1250.6,703.0"/><polygon points="1256.1,697.5 1266.1,697.5 1271.6,703.0 1250.6,703.0"/><polygon points="1271.6,683.0 1271.6,703.0 1266.1,697.5 1266.1,685.8"/><path d="M1250.6,663.0L1256.1,668.5M1271.6,663.0L1266.1,668.5M1250.6,703.0L1256.1,697.5M1271.6,703.0L1266.1,697.5M1250.6,683.0L1256.1,680.2M1250.6,683.0L1256.1,685.8M1271.6,683.0L1266.1,680.2M1271.6,683.0L1266.1,685.8" stroke="#000" stroke-width="1.1" fill="none"/><polygon points="1283.0,663.0 1304.0,663.0 1298.5,668.5 1288.5,668.5"/><polygon points="1283.0,663.0 1288.5,668.5 1288.5,680.2 1283.0,683.0"/><polygon points="1283.0,683.0 1288.5,680.2 1298.5,680.2 1304.0,683.0 1298.5,685.8 1288.5,685.8"/><polygon points="1283.0,683.0 1288.5,685.8 1288.5,697.5 1283.0,703.0"/><polygon points="1288.5,697.5 1298.5,697.5 1304.0,703.0 1283.0,703.0"/><polygon points="1304.0,683.0 1304.0,703.0 1298.5,697.5 1298.5,685.8"/><path d="M1283.0,663.0L1288.5,668.5M1304.0,663.0L1298.5,668.5M1283.0,703.0L1288.5,697.5M1304.0,703.0L1298.5,697.5M1283.0,683.0L1288.5,680.2M1283.0,683.0L1288.5,685.8M1304.0,683.0L1298.5,680.2M1304.0,683.0L1298.5,685.8" stroke="#000" stroke-width="1.1" fill="none"/><polygon points="1315.5,663.0 1336.5,663.0 1331.0,668.5 1321.0,668.5"/><polygon points="1315.5,663.0 1321.0,668.5 1321.0,680.2 1315.5,683.0"/><polygon points="1315.5,683.0 1321.0,680.2 1331.0,680.2 1336.5,683.0 1331.0,685.8 1321.0,685.8"/><polygon points="1336.5,683.0 1336.5,703.0 1331.0,697.5 1331.0,685.8"/><polygon points="1321.0,697.5 1331.0,697.5 1336.5,703.0 1315.5,703.0"/><path d="M1315.5,663.0L1321.0,668.5M1336.5,663.0L1331.0,668.5M1315.5,703.0L1321.0,697.5M1336.5,703.0L1331.0,697.5M1315.5,683.0L1321.0,680.2M1315.5,683.0L1321.0,685.8M1336.5,683.0L1331.0,680.2M1336.5,683.0L1331.0,685.8" stroke="#000" stroke-width="1.1" fill="none"/><rect x="1207.5" y="697" width="7" height="6" rx="2"/></g></svg>
<div class="t" style="left:1348px;top:680.92px;font-size:19px;color:#00ffff;letter-spacing:-1.22px;font-weight:bold;">В</div>
</body></html>
